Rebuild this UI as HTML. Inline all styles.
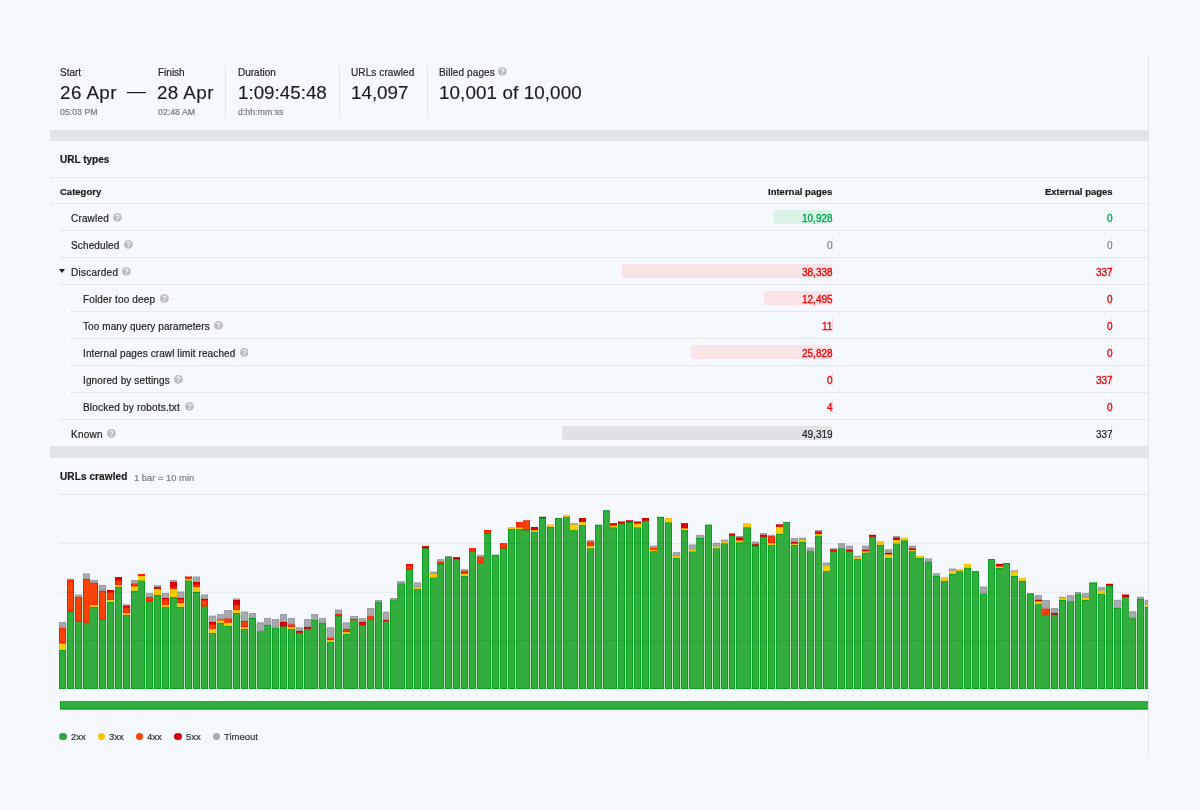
<!DOCTYPE html>
<html><head><meta charset="utf-8"><style>
html,body{margin:0;padding:0;}
body{width:1200px;height:810px;background:#f5f8fc;position:relative;overflow:hidden;font-family:"Liberation Sans", sans-serif;}
.t{position:absolute;white-space:nowrap;line-height:1;will-change:transform;-webkit-text-stroke:0.2px currentColor;}
.vl{position:absolute;width:1px;background:#e2e6eb;}
.hl{position:absolute;height:1px;background:#e4e7eb;}
.band{position:absolute;left:50px;width:1098px;background:#e1e5ea;}
.hq{position:absolute;}
.hq svg{display:block;}
.vb{position:absolute;border-radius:2px;}
.dot{position:absolute;width:7.4px;height:7.4px;border-radius:50%;}
</style></head><body>
<div class="t" style="left:59.50px;top:68.13px;font-size:10px;color:#262626;font-weight:normal;">Start</div><div class="t" style="left:59.50px;top:83.69px;font-size:18.8px;color:#1c1c1c;font-weight:normal;-webkit-text-stroke:0.15px currentColor;letter-spacing:0.44px;">26 Apr</div><div class="t" style="left:59.50px;top:108.35px;font-size:8.8px;color:#7a7a7a;font-weight:normal;">05:03 PM</div><div class="t" style="left:127.00px;top:81.89px;font-size:18.8px;color:#1c1c1c;font-weight:normal;-webkit-text-stroke:0.15px currentColor;">&mdash;</div><div class="t" style="left:157.80px;top:68.13px;font-size:10px;color:#262626;font-weight:normal;">Finish</div><div class="t" style="left:157.20px;top:83.69px;font-size:18.8px;color:#1c1c1c;font-weight:normal;-webkit-text-stroke:0.15px currentColor;letter-spacing:0.42px;">28 Apr</div><div class="t" style="left:157.80px;top:108.35px;font-size:8.8px;color:#7a7a7a;font-weight:normal;">02:48 AM</div><div class="t" style="left:237.80px;top:68.13px;font-size:10px;color:#262626;font-weight:normal;">Duration</div><div class="t" style="left:237.80px;top:83.69px;font-size:18.8px;color:#1c1c1c;font-weight:normal;-webkit-text-stroke:0.15px currentColor;">1:09:45:48</div><div class="t" style="left:237.80px;top:108.35px;font-size:8.8px;color:#7a7a7a;font-weight:normal;">d:hh:mm:ss</div><div class="t" style="left:351.20px;top:68.13px;font-size:10px;color:#262626;font-weight:normal;letter-spacing:0.1px;">URLs crawled</div><div class="t" style="left:351.20px;top:83.69px;font-size:18.8px;color:#1c1c1c;font-weight:normal;-webkit-text-stroke:0.15px currentColor;">14,097</div><div class="t" style="left:438.80px;top:68.13px;font-size:10px;color:#262626;font-weight:normal;letter-spacing:0.12px;">Billed pages</div><div class="hq" style="left:498.30px;top:67.30px;width:8.8px;height:8.8px"><svg width="8.8" height="8.8" viewBox="0 0 16 16"><circle cx="8" cy="8" r="8" fill="#bcbdc1"/><path d="M5.3 6.1a2.7 2.6 0 1 1 4.0 2.3c-.8.45-1.3.8-1.3 1.4v.2" stroke="#f4f5f7" stroke-width="2" fill="none"/><circle cx="8" cy="12.3" r="1.3" fill="#f4f5f7"/></svg></div><div class="t" style="left:438.80px;top:83.69px;font-size:18.8px;color:#1c1c1c;font-weight:normal;-webkit-text-stroke:0.15px currentColor;letter-spacing:0.11px;">10,001 of 10,000</div><div class="vl" style="left:225.3px;top:65px;height:52.5px"></div><div class="vl" style="left:338.7px;top:65px;height:52.5px"></div><div class="vl" style="left:426.5px;top:65px;height:52.5px"></div><div class="band" style="top:129.5px;height:11.3px"></div><div class="band" style="top:446.3px;height:11.5px"></div><div class="vl" style="left:1147.6px;top:56px;height:698px"></div><div class="t" style="left:59.70px;top:155.24px;font-size:10px;color:#1c1c1c;font-weight:bold;">URL types</div><div class="hl" style="left:50px;top:176.5px;width:1098px"></div><div class="t" style="left:59.70px;top:186.56px;font-size:9.5px;color:#1c1c1c;font-weight:bold;">Category</div><div class="t" style="right:367.50px;top:186.56px;font-size:9.5px;color:#1c1c1c;font-weight:bold;text-align:right;">Internal pages</div><div class="t" style="right:87.60px;top:186.56px;font-size:9.5px;color:#1c1c1c;font-weight:bold;text-align:right;">External pages</div><div class="hl" style="left:50px;top:203.40px;width:1098px"></div><div class="t" style="left:71.00px;top:213.74px;font-size:10px;color:#1e1e1e;font-weight:normal;letter-spacing:0.17px;">Crawled</div><div class="hq" style="left:113.10px;top:212.80px;width:8.8px;height:8.8px"><svg width="8.8" height="8.8" viewBox="0 0 16 16"><circle cx="8" cy="8" r="8" fill="#bcbdc1"/><path d="M5.3 6.1a2.7 2.6 0 1 1 4.0 2.3c-.8.45-1.3.8-1.3 1.4v.2" stroke="#f4f5f7" stroke-width="2" fill="none"/><circle cx="8" cy="12.3" r="1.3" fill="#f4f5f7"/></svg></div><div class="vb" style="left:772.50px;top:210.00px;width:59.80px;height:14.3px;background:#dcf3e7"></div><div class="vb" style="left:1111px;top:210.00px;width:1px;height:14.3px;background:#d8efe2;border-radius:0"></div><div class="t" style="right:367.50px;top:213.74px;font-size:10px;color:#00a650;font-weight:normal;text-align:right;-webkit-text-stroke:0.32px currentColor;">10,928</div><div class="t" style="right:87.60px;top:213.74px;font-size:10px;color:#00a650;font-weight:normal;text-align:right;-webkit-text-stroke:0.32px currentColor;">0</div><div class="hl" style="left:60px;top:230.40px;width:1088px"></div><div class="t" style="left:71.00px;top:240.74px;font-size:10px;color:#1e1e1e;font-weight:normal;letter-spacing:0.14px;">Scheduled</div><div class="hq" style="left:124.25px;top:239.80px;width:8.8px;height:8.8px"><svg width="8.8" height="8.8" viewBox="0 0 16 16"><circle cx="8" cy="8" r="8" fill="#bcbdc1"/><path d="M5.3 6.1a2.7 2.6 0 1 1 4.0 2.3c-.8.45-1.3.8-1.3 1.4v.2" stroke="#f4f5f7" stroke-width="2" fill="none"/><circle cx="8" cy="12.3" r="1.3" fill="#f4f5f7"/></svg></div><div class="vb" style="left:832px;top:237.00px;width:1px;height:14.3px;background:#e6e8ec;border-radius:0"></div><div class="vb" style="left:1111px;top:237.00px;width:1px;height:14.3px;background:#e6e8ec;border-radius:0"></div><div class="t" style="right:367.50px;top:240.74px;font-size:10px;color:#7d7d7d;font-weight:normal;text-align:right;">0</div><div class="t" style="right:87.60px;top:240.74px;font-size:10px;color:#7d7d7d;font-weight:normal;text-align:right;">0</div><div class="hl" style="left:60px;top:257.40px;width:1088px"></div><div class="t" style="left:71.00px;top:267.74px;font-size:10px;color:#1e1e1e;font-weight:normal;letter-spacing:0.24px;">Discarded</div><div class="hq" style="left:122.00px;top:266.80px;width:8.8px;height:8.8px"><svg width="8.8" height="8.8" viewBox="0 0 16 16"><circle cx="8" cy="8" r="8" fill="#bcbdc1"/><path d="M5.3 6.1a2.7 2.6 0 1 1 4.0 2.3c-.8.45-1.3.8-1.3 1.4v.2" stroke="#f4f5f7" stroke-width="2" fill="none"/><circle cx="8" cy="12.3" r="1.3" fill="#f4f5f7"/></svg></div><div class="t" style="left:58.9px;top:269.00px;width:0;height:0;border-left:3px solid transparent;border-right:3px solid transparent;border-top:4.8px solid #1c1c1c"></div><div class="vb" style="left:622.30px;top:264.00px;width:210.00px;height:14.3px;background:#f9e3e7"></div><div class="vb" style="left:1111px;top:264.00px;width:1px;height:14.3px;background:#f5dbe0;border-radius:0"></div><div class="t" style="right:367.50px;top:267.74px;font-size:10px;color:#f50000;font-weight:normal;text-align:right;-webkit-text-stroke:0.32px currentColor;">38,338</div><div class="t" style="right:87.60px;top:267.74px;font-size:10px;color:#f50000;font-weight:normal;text-align:right;-webkit-text-stroke:0.32px currentColor;">337</div><div class="hl" style="left:60px;top:284.40px;width:1088px"></div><div class="t" style="left:83.00px;top:294.74px;font-size:10px;color:#1e1e1e;font-weight:normal;letter-spacing:0.14px;">Folder too deep</div><div class="hq" style="left:160.00px;top:293.80px;width:8.8px;height:8.8px"><svg width="8.8" height="8.8" viewBox="0 0 16 16"><circle cx="8" cy="8" r="8" fill="#bcbdc1"/><path d="M5.3 6.1a2.7 2.6 0 1 1 4.0 2.3c-.8.45-1.3.8-1.3 1.4v.2" stroke="#f4f5f7" stroke-width="2" fill="none"/><circle cx="8" cy="12.3" r="1.3" fill="#f4f5f7"/></svg></div><div class="vb" style="left:763.90px;top:291.00px;width:68.40px;height:14.3px;background:#f9e3e7"></div><div class="vb" style="left:1111px;top:291.00px;width:1px;height:14.3px;background:#f5dbe0;border-radius:0"></div><div class="t" style="right:367.50px;top:294.74px;font-size:10px;color:#f50000;font-weight:normal;text-align:right;-webkit-text-stroke:0.32px currentColor;">12,495</div><div class="t" style="right:87.60px;top:294.74px;font-size:10px;color:#f50000;font-weight:normal;text-align:right;-webkit-text-stroke:0.32px currentColor;">0</div><div class="hl" style="left:71px;top:311.40px;width:1077px"></div><div class="t" style="left:83.00px;top:321.74px;font-size:10px;color:#1e1e1e;font-weight:normal;letter-spacing:0.09px;">Too many query parameters</div><div class="hq" style="left:214.25px;top:320.80px;width:8.8px;height:8.8px"><svg width="8.8" height="8.8" viewBox="0 0 16 16"><circle cx="8" cy="8" r="8" fill="#bcbdc1"/><path d="M5.3 6.1a2.7 2.6 0 1 1 4.0 2.3c-.8.45-1.3.8-1.3 1.4v.2" stroke="#f4f5f7" stroke-width="2" fill="none"/><circle cx="8" cy="12.3" r="1.3" fill="#f4f5f7"/></svg></div><div class="vb" style="left:832px;top:318.00px;width:1px;height:14.3px;background:#f5dbe0;border-radius:0"></div><div class="vb" style="left:1111px;top:318.00px;width:1px;height:14.3px;background:#f5dbe0;border-radius:0"></div><div class="t" style="right:367.50px;top:321.74px;font-size:10px;color:#f50000;font-weight:normal;text-align:right;-webkit-text-stroke:0.32px currentColor;">11</div><div class="t" style="right:87.60px;top:321.74px;font-size:10px;color:#f50000;font-weight:normal;text-align:right;-webkit-text-stroke:0.32px currentColor;">0</div><div class="hl" style="left:71px;top:338.40px;width:1077px"></div><div class="t" style="left:83.00px;top:348.74px;font-size:10px;color:#1e1e1e;font-weight:normal;letter-spacing:0.1px;">Internal pages crawl limit reached</div><div class="hq" style="left:239.50px;top:347.80px;width:8.8px;height:8.8px"><svg width="8.8" height="8.8" viewBox="0 0 16 16"><circle cx="8" cy="8" r="8" fill="#bcbdc1"/><path d="M5.3 6.1a2.7 2.6 0 1 1 4.0 2.3c-.8.45-1.3.8-1.3 1.4v.2" stroke="#f4f5f7" stroke-width="2" fill="none"/><circle cx="8" cy="12.3" r="1.3" fill="#f4f5f7"/></svg></div><div class="vb" style="left:690.90px;top:345.00px;width:141.40px;height:14.3px;background:#f9e3e7"></div><div class="vb" style="left:1111px;top:345.00px;width:1px;height:14.3px;background:#f5dbe0;border-radius:0"></div><div class="t" style="right:367.50px;top:348.74px;font-size:10px;color:#f50000;font-weight:normal;text-align:right;-webkit-text-stroke:0.32px currentColor;">25,828</div><div class="t" style="right:87.60px;top:348.74px;font-size:10px;color:#f50000;font-weight:normal;text-align:right;-webkit-text-stroke:0.32px currentColor;">0</div><div class="hl" style="left:71px;top:365.40px;width:1077px"></div><div class="t" style="left:83.00px;top:375.74px;font-size:10px;color:#1e1e1e;font-weight:normal;letter-spacing:0.12px;">Ignored by settings</div><div class="hq" style="left:174.25px;top:374.80px;width:8.8px;height:8.8px"><svg width="8.8" height="8.8" viewBox="0 0 16 16"><circle cx="8" cy="8" r="8" fill="#bcbdc1"/><path d="M5.3 6.1a2.7 2.6 0 1 1 4.0 2.3c-.8.45-1.3.8-1.3 1.4v.2" stroke="#f4f5f7" stroke-width="2" fill="none"/><circle cx="8" cy="12.3" r="1.3" fill="#f4f5f7"/></svg></div><div class="vb" style="left:832px;top:372.00px;width:1px;height:14.3px;background:#f5dbe0;border-radius:0"></div><div class="vb" style="left:1111px;top:372.00px;width:1px;height:14.3px;background:#f5dbe0;border-radius:0"></div><div class="t" style="right:367.50px;top:375.74px;font-size:10px;color:#f50000;font-weight:normal;text-align:right;-webkit-text-stroke:0.32px currentColor;">0</div><div class="t" style="right:87.60px;top:375.74px;font-size:10px;color:#f50000;font-weight:normal;text-align:right;-webkit-text-stroke:0.32px currentColor;">337</div><div class="hl" style="left:71px;top:392.40px;width:1077px"></div><div class="t" style="left:83.00px;top:402.74px;font-size:10px;color:#1e1e1e;font-weight:normal;letter-spacing:0.2px;">Blocked by robots.txt</div><div class="hq" style="left:185.00px;top:401.80px;width:8.8px;height:8.8px"><svg width="8.8" height="8.8" viewBox="0 0 16 16"><circle cx="8" cy="8" r="8" fill="#bcbdc1"/><path d="M5.3 6.1a2.7 2.6 0 1 1 4.0 2.3c-.8.45-1.3.8-1.3 1.4v.2" stroke="#f4f5f7" stroke-width="2" fill="none"/><circle cx="8" cy="12.3" r="1.3" fill="#f4f5f7"/></svg></div><div class="vb" style="left:832px;top:399.00px;width:1px;height:14.3px;background:#f5dbe0;border-radius:0"></div><div class="vb" style="left:1111px;top:399.00px;width:1px;height:14.3px;background:#f5dbe0;border-radius:0"></div><div class="t" style="right:367.50px;top:402.74px;font-size:10px;color:#f50000;font-weight:normal;text-align:right;-webkit-text-stroke:0.32px currentColor;">4</div><div class="t" style="right:87.60px;top:402.74px;font-size:10px;color:#f50000;font-weight:normal;text-align:right;-webkit-text-stroke:0.32px currentColor;">0</div><div class="hl" style="left:60px;top:419.40px;width:1088px"></div><div class="t" style="left:71.00px;top:429.74px;font-size:10px;color:#1e1e1e;font-weight:normal;letter-spacing:0.22px;">Known</div><div class="hq" style="left:107.00px;top:428.80px;width:8.8px;height:8.8px"><svg width="8.8" height="8.8" viewBox="0 0 16 16"><circle cx="8" cy="8" r="8" fill="#bcbdc1"/><path d="M5.3 6.1a2.7 2.6 0 1 1 4.0 2.3c-.8.45-1.3.8-1.3 1.4v.2" stroke="#f4f5f7" stroke-width="2" fill="none"/><circle cx="8" cy="12.3" r="1.3" fill="#f4f5f7"/></svg></div><div class="vb" style="left:561.80px;top:426.00px;width:270.50px;height:14.3px;background:#e1e2e5"></div><div class="vb" style="left:1111px;top:426.00px;width:1px;height:14.3px;background:#d6d8dc;border-radius:0"></div><div class="t" style="right:367.50px;top:429.74px;font-size:10px;color:#222222;font-weight:normal;text-align:right;">49,319</div><div class="t" style="right:87.60px;top:429.74px;font-size:10px;color:#222222;font-weight:normal;text-align:right;">337</div><div class="t" style="left:60.00px;top:472.04px;font-size:10px;color:#1c1c1c;font-weight:bold;letter-spacing:0.11px;">URLs crawled</div><div class="t" style="left:133.70px;top:473.14px;font-size:9.4px;color:#7d7d7d;font-weight:normal;">1 bar = 10 min</div>
<svg class="chart" width="1200" height="810" viewBox="0 0 1200 810" style="position:absolute;left:0;top:0"><defs><clipPath id="cp"><rect x="0" y="0" width="1148" height="810"/></clipPath></defs><g clip-path="url(#cp)"><rect x="66" y="623.2" width="1" height="65.8" fill="#c2e2c3"/>
<rect x="59" y="650.00" width="7" height="39.00" fill="#33ae3e"/>
<rect x="59" y="650.00" width="7" height="1" fill="#07a220"/>
<rect x="59" y="688.00" width="7" height="1" fill="#07a220"/>
<rect x="59" y="650.00" width="1" height="39.00" fill="#07a220"/>
<rect x="65" y="650.00" width="1" height="39.00" fill="#07a220"/>
<rect x="59" y="643.30" width="7" height="6.70" fill="#fcd000"/>
<rect x="59" y="643.30" width="7" height="1" fill="#f6c200"/>
<rect x="59" y="649.00" width="7" height="1" fill="#f6c200"/>
<rect x="59" y="643.30" width="1" height="6.70" fill="#f6c200"/>
<rect x="65" y="643.30" width="1" height="6.70" fill="#f6c200"/>
<rect x="59" y="627.50" width="7" height="15.80" fill="#fa4208"/>
<rect x="59" y="627.50" width="7" height="1" fill="#ff1800"/>
<rect x="59" y="642.30" width="7" height="1" fill="#ff1800"/>
<rect x="59" y="627.50" width="1" height="15.80" fill="#ff1800"/>
<rect x="65" y="627.50" width="1" height="15.80" fill="#ff1800"/>
<rect x="59" y="622.20" width="7" height="5.30" fill="#a9aaaf"/>
<rect x="59" y="622.20" width="7" height="1" fill="#9c9ca2"/>
<rect x="59" y="626.50" width="7" height="1" fill="#9c9ca2"/>
<rect x="59" y="622.20" width="1" height="5.30" fill="#9c9ca2"/>
<rect x="65" y="622.20" width="1" height="5.30" fill="#9c9ca2"/>
<rect x="74" y="595.7" width="1" height="93.3" fill="#c2e2c3"/>
<rect x="67" y="611.30" width="7" height="77.70" fill="#33ae3e"/>
<rect x="67" y="611.30" width="7" height="1" fill="#07a220"/>
<rect x="67" y="688.00" width="7" height="1" fill="#07a220"/>
<rect x="67" y="611.30" width="1" height="77.70" fill="#07a220"/>
<rect x="73" y="611.30" width="1" height="77.70" fill="#07a220"/>
<rect x="67" y="580.00" width="7" height="31.30" fill="#fa4208"/>
<rect x="67" y="580.00" width="7" height="1" fill="#ff1800"/>
<rect x="67" y="610.30" width="7" height="1" fill="#ff1800"/>
<rect x="67" y="580.00" width="1" height="31.30" fill="#ff1800"/>
<rect x="73" y="580.00" width="1" height="31.30" fill="#ff1800"/>
<rect x="67" y="578.80" width="7" height="1.20" fill="#a9aaaf"/>
<rect x="67" y="578.80" width="7" height="1" fill="#9c9ca2"/>
<rect x="67" y="578.80" width="1" height="1.20" fill="#9c9ca2"/>
<rect x="73" y="578.80" width="1" height="1.20" fill="#9c9ca2"/>
<rect x="82" y="595.7" width="1" height="93.3" fill="#c2e2c3"/>
<rect x="75" y="620.80" width="7" height="68.20" fill="#33ae3e"/>
<rect x="75" y="620.80" width="7" height="1" fill="#07a220"/>
<rect x="75" y="688.00" width="7" height="1" fill="#07a220"/>
<rect x="75" y="620.80" width="1" height="68.20" fill="#07a220"/>
<rect x="81" y="620.80" width="1" height="68.20" fill="#07a220"/>
<rect x="75" y="596.70" width="7" height="24.10" fill="#fa4208"/>
<rect x="75" y="596.70" width="7" height="1" fill="#ff1800"/>
<rect x="75" y="619.80" width="7" height="1" fill="#ff1800"/>
<rect x="75" y="596.70" width="1" height="24.10" fill="#ff1800"/>
<rect x="81" y="596.70" width="1" height="24.10" fill="#ff1800"/>
<rect x="75" y="594.70" width="7" height="2.00" fill="#a9aaaf"/>
<rect x="75" y="594.70" width="7" height="1" fill="#9c9ca2"/>
<rect x="75" y="595.70" width="7" height="1" fill="#9c9ca2"/>
<rect x="75" y="594.70" width="1" height="2.00" fill="#9c9ca2"/>
<rect x="81" y="594.70" width="1" height="2.00" fill="#9c9ca2"/>
<rect x="83" y="622.50" width="7" height="66.50" fill="#33ae3e"/>
<rect x="83" y="622.50" width="7" height="1" fill="#07a220"/>
<rect x="83" y="688.00" width="7" height="1" fill="#07a220"/>
<rect x="83" y="622.50" width="1" height="66.50" fill="#07a220"/>
<rect x="83" y="578.80" width="7" height="43.70" fill="#fa4208"/>
<rect x="83" y="578.80" width="7" height="1" fill="#ff1800"/>
<rect x="83" y="621.50" width="7" height="1" fill="#ff1800"/>
<rect x="83" y="578.80" width="1" height="43.70" fill="#ff1800"/>
<rect x="83" y="573.70" width="7" height="5.10" fill="#a9aaaf"/>
<rect x="83" y="573.70" width="7" height="1" fill="#9c9ca2"/>
<rect x="83" y="577.80" width="7" height="1" fill="#9c9ca2"/>
<rect x="83" y="573.70" width="1" height="5.10" fill="#9c9ca2"/>
<rect x="98" y="586.0" width="1" height="103.0" fill="#c2e2c3"/>
<rect x="90" y="607.00" width="8" height="82.00" fill="#33ae3e"/>
<rect x="90" y="607.00" width="8" height="1" fill="#07a220"/>
<rect x="90" y="688.00" width="8" height="1" fill="#07a220"/>
<rect x="97" y="607.00" width="1" height="82.00" fill="#07a220"/>
<rect x="90" y="604.70" width="8" height="2.30" fill="#fcd000"/>
<rect x="90" y="604.70" width="8" height="1" fill="#f6c200"/>
<rect x="90" y="606.00" width="8" height="1" fill="#f6c200"/>
<rect x="97" y="604.70" width="1" height="2.30" fill="#f6c200"/>
<rect x="90" y="582.50" width="8" height="22.20" fill="#fa4208"/>
<rect x="90" y="582.50" width="8" height="1" fill="#ff1800"/>
<rect x="90" y="603.70" width="8" height="1" fill="#ff1800"/>
<rect x="97" y="582.50" width="1" height="22.20" fill="#ff1800"/>
<rect x="90" y="580.00" width="8" height="2.50" fill="#a9aaaf"/>
<rect x="90" y="580.00" width="8" height="1" fill="#9c9ca2"/>
<rect x="90" y="581.50" width="8" height="1" fill="#9c9ca2"/>
<rect x="97" y="580.00" width="1" height="2.50" fill="#9c9ca2"/>
<rect x="106" y="591.0" width="1" height="98.0" fill="#c2e2c3"/>
<rect x="99" y="619.50" width="7" height="69.50" fill="#33ae3e"/>
<rect x="99" y="619.50" width="7" height="1" fill="#07a220"/>
<rect x="99" y="688.00" width="7" height="1" fill="#07a220"/>
<rect x="99" y="619.50" width="1" height="69.50" fill="#07a220"/>
<rect x="105" y="619.50" width="1" height="69.50" fill="#07a220"/>
<rect x="99" y="590.50" width="7" height="29.00" fill="#fa4208"/>
<rect x="99" y="590.50" width="7" height="1" fill="#ff1800"/>
<rect x="99" y="618.50" width="7" height="1" fill="#ff1800"/>
<rect x="99" y="590.50" width="1" height="29.00" fill="#ff1800"/>
<rect x="105" y="590.50" width="1" height="29.00" fill="#ff1800"/>
<rect x="99" y="585.00" width="7" height="5.50" fill="#a9aaaf"/>
<rect x="99" y="585.00" width="7" height="1" fill="#9c9ca2"/>
<rect x="99" y="589.50" width="7" height="1" fill="#9c9ca2"/>
<rect x="99" y="585.00" width="1" height="5.50" fill="#9c9ca2"/>
<rect x="105" y="585.00" width="1" height="5.50" fill="#9c9ca2"/>
<rect x="114" y="591.0" width="1" height="98.0" fill="#c2e2c3"/>
<rect x="107" y="602.00" width="7" height="87.00" fill="#33ae3e"/>
<rect x="107" y="602.00" width="7" height="1" fill="#07a220"/>
<rect x="107" y="688.00" width="7" height="1" fill="#07a220"/>
<rect x="107" y="602.00" width="1" height="87.00" fill="#07a220"/>
<rect x="113" y="602.00" width="1" height="87.00" fill="#07a220"/>
<rect x="107" y="599.70" width="7" height="2.30" fill="#fcd000"/>
<rect x="107" y="599.70" width="7" height="1" fill="#f6c200"/>
<rect x="107" y="601.00" width="7" height="1" fill="#f6c200"/>
<rect x="107" y="599.70" width="1" height="2.30" fill="#f6c200"/>
<rect x="113" y="599.70" width="1" height="2.30" fill="#f6c200"/>
<rect x="107" y="591.70" width="7" height="8.00" fill="#fa4208"/>
<rect x="107" y="591.70" width="7" height="1" fill="#ff1800"/>
<rect x="107" y="598.70" width="7" height="1" fill="#ff1800"/>
<rect x="107" y="591.70" width="1" height="8.00" fill="#ff1800"/>
<rect x="113" y="591.70" width="1" height="8.00" fill="#ff1800"/>
<rect x="107" y="590.00" width="7" height="1.70" fill="#e0000c"/>
<rect x="107" y="590.00" width="7" height="1" fill="#d10000"/>
<rect x="107" y="590.70" width="7" height="1" fill="#d10000"/>
<rect x="107" y="590.00" width="1" height="1.70" fill="#d10000"/>
<rect x="113" y="590.00" width="1" height="1.70" fill="#d10000"/>
<rect x="122" y="605.5" width="1" height="83.5" fill="#c2e2c3"/>
<rect x="115" y="587.00" width="7" height="102.00" fill="#33ae3e"/>
<rect x="115" y="587.00" width="7" height="1" fill="#07a220"/>
<rect x="115" y="688.00" width="7" height="1" fill="#07a220"/>
<rect x="115" y="587.00" width="1" height="102.00" fill="#07a220"/>
<rect x="121" y="587.00" width="1" height="102.00" fill="#07a220"/>
<rect x="115" y="584.70" width="7" height="2.30" fill="#fcd000"/>
<rect x="115" y="584.70" width="7" height="1" fill="#f6c200"/>
<rect x="115" y="586.00" width="7" height="1" fill="#f6c200"/>
<rect x="115" y="584.70" width="1" height="2.30" fill="#f6c200"/>
<rect x="121" y="584.70" width="1" height="2.30" fill="#f6c200"/>
<rect x="115" y="580.30" width="7" height="4.40" fill="#fa4208"/>
<rect x="115" y="580.30" width="7" height="1" fill="#ff1800"/>
<rect x="115" y="583.70" width="7" height="1" fill="#ff1800"/>
<rect x="115" y="580.30" width="1" height="4.40" fill="#ff1800"/>
<rect x="121" y="580.30" width="1" height="4.40" fill="#ff1800"/>
<rect x="115" y="577.00" width="7" height="3.30" fill="#e0000c"/>
<rect x="115" y="577.00" width="7" height="1" fill="#d10000"/>
<rect x="115" y="579.30" width="7" height="1" fill="#d10000"/>
<rect x="115" y="577.00" width="1" height="3.30" fill="#d10000"/>
<rect x="121" y="577.00" width="1" height="3.30" fill="#d10000"/>
<rect x="130" y="605.5" width="1" height="83.5" fill="#c2e2c3"/>
<rect x="123" y="614.70" width="7" height="74.30" fill="#33ae3e"/>
<rect x="123" y="614.70" width="7" height="1" fill="#07a220"/>
<rect x="123" y="688.00" width="7" height="1" fill="#07a220"/>
<rect x="123" y="614.70" width="1" height="74.30" fill="#07a220"/>
<rect x="129" y="614.70" width="1" height="74.30" fill="#07a220"/>
<rect x="123" y="613.00" width="7" height="1.70" fill="#fcd000"/>
<rect x="123" y="613.00" width="7" height="1" fill="#f6c200"/>
<rect x="123" y="613.70" width="7" height="1" fill="#f6c200"/>
<rect x="123" y="613.00" width="1" height="1.70" fill="#f6c200"/>
<rect x="129" y="613.00" width="1" height="1.70" fill="#f6c200"/>
<rect x="123" y="607.50" width="7" height="5.50" fill="#fa4208"/>
<rect x="123" y="607.50" width="7" height="1" fill="#ff1800"/>
<rect x="123" y="612.00" width="7" height="1" fill="#ff1800"/>
<rect x="123" y="607.50" width="1" height="5.50" fill="#ff1800"/>
<rect x="129" y="607.50" width="1" height="5.50" fill="#ff1800"/>
<rect x="123" y="605.30" width="7" height="2.20" fill="#e0000c"/>
<rect x="123" y="605.30" width="7" height="1" fill="#d10000"/>
<rect x="123" y="606.50" width="7" height="1" fill="#d10000"/>
<rect x="123" y="605.30" width="1" height="2.20" fill="#d10000"/>
<rect x="129" y="605.30" width="1" height="2.20" fill="#d10000"/>
<rect x="123" y="604.50" width="7" height="0.80" fill="#a9aaaf"/>
<rect x="123" y="604.50" width="7" height="1" fill="#9c9ca2"/>
<rect x="123" y="604.50" width="1" height="0.80" fill="#9c9ca2"/>
<rect x="129" y="604.50" width="1" height="0.80" fill="#9c9ca2"/>
<rect x="131" y="590.50" width="7" height="98.50" fill="#33ae3e"/>
<rect x="131" y="590.50" width="7" height="1" fill="#07a220"/>
<rect x="131" y="688.00" width="7" height="1" fill="#07a220"/>
<rect x="131" y="590.50" width="1" height="98.50" fill="#07a220"/>
<rect x="131" y="586.30" width="7" height="4.20" fill="#fcd000"/>
<rect x="131" y="586.30" width="7" height="1" fill="#f6c200"/>
<rect x="131" y="589.50" width="7" height="1" fill="#f6c200"/>
<rect x="131" y="586.30" width="1" height="4.20" fill="#f6c200"/>
<rect x="131" y="583.30" width="7" height="3.00" fill="#fa4208"/>
<rect x="131" y="583.30" width="7" height="1" fill="#ff1800"/>
<rect x="131" y="585.30" width="7" height="1" fill="#ff1800"/>
<rect x="131" y="583.30" width="1" height="3.00" fill="#ff1800"/>
<rect x="131" y="580.00" width="7" height="3.30" fill="#a9aaaf"/>
<rect x="131" y="580.00" width="7" height="1" fill="#9c9ca2"/>
<rect x="131" y="582.30" width="7" height="1" fill="#9c9ca2"/>
<rect x="131" y="580.00" width="1" height="3.30" fill="#9c9ca2"/>
<rect x="145" y="594.0" width="1" height="95.0" fill="#c2e2c3"/>
<rect x="138" y="580.30" width="7" height="108.70" fill="#33ae3e"/>
<rect x="138" y="580.30" width="7" height="1" fill="#07a220"/>
<rect x="138" y="688.00" width="7" height="1" fill="#07a220"/>
<rect x="144" y="580.30" width="1" height="108.70" fill="#07a220"/>
<rect x="138" y="575.80" width="7" height="4.50" fill="#fcd000"/>
<rect x="138" y="575.80" width="7" height="1" fill="#f6c200"/>
<rect x="138" y="579.30" width="7" height="1" fill="#f6c200"/>
<rect x="144" y="575.80" width="1" height="4.50" fill="#f6c200"/>
<rect x="138" y="574.20" width="7" height="1.60" fill="#fa4208"/>
<rect x="138" y="574.20" width="7" height="1" fill="#ff1800"/>
<rect x="138" y="574.80" width="7" height="1" fill="#ff1800"/>
<rect x="144" y="574.20" width="1" height="1.60" fill="#ff1800"/>
<rect x="153" y="594.0" width="1" height="95.0" fill="#c2e2c3"/>
<rect x="146" y="601.30" width="7" height="87.70" fill="#33ae3e"/>
<rect x="146" y="601.30" width="7" height="1" fill="#07a220"/>
<rect x="146" y="688.00" width="7" height="1" fill="#07a220"/>
<rect x="146" y="601.30" width="1" height="87.70" fill="#07a220"/>
<rect x="152" y="601.30" width="1" height="87.70" fill="#07a220"/>
<rect x="146" y="596.70" width="7" height="4.60" fill="#fa4208"/>
<rect x="146" y="596.70" width="7" height="1" fill="#ff1800"/>
<rect x="146" y="600.30" width="7" height="1" fill="#ff1800"/>
<rect x="146" y="596.70" width="1" height="4.60" fill="#ff1800"/>
<rect x="152" y="596.70" width="1" height="4.60" fill="#ff1800"/>
<rect x="146" y="593.00" width="7" height="3.70" fill="#a9aaaf"/>
<rect x="146" y="593.00" width="7" height="1" fill="#9c9ca2"/>
<rect x="146" y="595.70" width="7" height="1" fill="#9c9ca2"/>
<rect x="146" y="593.00" width="1" height="3.70" fill="#9c9ca2"/>
<rect x="152" y="593.00" width="1" height="3.70" fill="#9c9ca2"/>
<rect x="161" y="594.3" width="1" height="94.7" fill="#c2e2c3"/>
<rect x="154" y="595.00" width="7" height="94.00" fill="#33ae3e"/>
<rect x="154" y="595.00" width="7" height="1" fill="#07a220"/>
<rect x="154" y="688.00" width="7" height="1" fill="#07a220"/>
<rect x="154" y="595.00" width="1" height="94.00" fill="#07a220"/>
<rect x="160" y="595.00" width="1" height="94.00" fill="#07a220"/>
<rect x="154" y="588.70" width="7" height="6.30" fill="#fcd000"/>
<rect x="154" y="588.70" width="7" height="1" fill="#f6c200"/>
<rect x="154" y="594.00" width="7" height="1" fill="#f6c200"/>
<rect x="154" y="588.70" width="1" height="6.30" fill="#f6c200"/>
<rect x="160" y="588.70" width="1" height="6.30" fill="#f6c200"/>
<rect x="154" y="586.70" width="7" height="2.00" fill="#e0000c"/>
<rect x="154" y="586.70" width="7" height="1" fill="#d10000"/>
<rect x="154" y="587.70" width="7" height="1" fill="#d10000"/>
<rect x="154" y="586.70" width="1" height="2.00" fill="#d10000"/>
<rect x="160" y="586.70" width="1" height="2.00" fill="#d10000"/>
<rect x="154" y="585.30" width="7" height="1.40" fill="#a9aaaf"/>
<rect x="154" y="585.30" width="7" height="1" fill="#9c9ca2"/>
<rect x="154" y="585.30" width="1" height="1.40" fill="#9c9ca2"/>
<rect x="160" y="585.30" width="1" height="1.40" fill="#9c9ca2"/>
<rect x="169" y="594.3" width="1" height="94.7" fill="#c2e2c3"/>
<rect x="162" y="606.70" width="7" height="82.30" fill="#33ae3e"/>
<rect x="162" y="606.70" width="7" height="1" fill="#07a220"/>
<rect x="162" y="688.00" width="7" height="1" fill="#07a220"/>
<rect x="162" y="606.70" width="1" height="82.30" fill="#07a220"/>
<rect x="168" y="606.70" width="1" height="82.30" fill="#07a220"/>
<rect x="162" y="604.70" width="7" height="2.00" fill="#fcd000"/>
<rect x="162" y="604.70" width="7" height="1" fill="#f6c200"/>
<rect x="162" y="605.70" width="7" height="1" fill="#f6c200"/>
<rect x="162" y="604.70" width="1" height="2.00" fill="#f6c200"/>
<rect x="168" y="604.70" width="1" height="2.00" fill="#f6c200"/>
<rect x="162" y="599.20" width="7" height="5.50" fill="#fa4208"/>
<rect x="162" y="599.20" width="7" height="1" fill="#ff1800"/>
<rect x="162" y="603.70" width="7" height="1" fill="#ff1800"/>
<rect x="162" y="599.20" width="1" height="5.50" fill="#ff1800"/>
<rect x="168" y="599.20" width="1" height="5.50" fill="#ff1800"/>
<rect x="162" y="598.00" width="7" height="1.20" fill="#e0000c"/>
<rect x="162" y="598.00" width="7" height="1" fill="#d10000"/>
<rect x="162" y="598.00" width="1" height="1.20" fill="#d10000"/>
<rect x="168" y="598.00" width="1" height="1.20" fill="#d10000"/>
<rect x="162" y="593.30" width="7" height="4.70" fill="#a9aaaf"/>
<rect x="162" y="593.30" width="7" height="1" fill="#9c9ca2"/>
<rect x="162" y="597.00" width="7" height="1" fill="#9c9ca2"/>
<rect x="162" y="593.30" width="1" height="4.70" fill="#9c9ca2"/>
<rect x="168" y="593.30" width="1" height="4.70" fill="#9c9ca2"/>
<rect x="170" y="597.00" width="7" height="92.00" fill="#33ae3e"/>
<rect x="170" y="597.00" width="7" height="1" fill="#07a220"/>
<rect x="170" y="688.00" width="7" height="1" fill="#07a220"/>
<rect x="170" y="597.00" width="1" height="92.00" fill="#07a220"/>
<rect x="170" y="588.70" width="7" height="8.30" fill="#fcd000"/>
<rect x="170" y="588.70" width="7" height="1" fill="#f6c200"/>
<rect x="170" y="596.00" width="7" height="1" fill="#f6c200"/>
<rect x="170" y="588.70" width="1" height="8.30" fill="#f6c200"/>
<rect x="170" y="586.70" width="7" height="2.00" fill="#fa4208"/>
<rect x="170" y="586.70" width="7" height="1" fill="#ff1800"/>
<rect x="170" y="587.70" width="7" height="1" fill="#ff1800"/>
<rect x="170" y="586.70" width="1" height="2.00" fill="#ff1800"/>
<rect x="170" y="581.70" width="7" height="5.00" fill="#e0000c"/>
<rect x="170" y="581.70" width="7" height="1" fill="#d10000"/>
<rect x="170" y="585.70" width="7" height="1" fill="#d10000"/>
<rect x="170" y="581.70" width="1" height="5.00" fill="#d10000"/>
<rect x="170" y="580.00" width="7" height="1.70" fill="#a9aaaf"/>
<rect x="170" y="580.00" width="7" height="1" fill="#9c9ca2"/>
<rect x="170" y="580.70" width="7" height="1" fill="#9c9ca2"/>
<rect x="170" y="580.00" width="1" height="1.70" fill="#9c9ca2"/>
<rect x="184" y="592.7" width="1" height="96.3" fill="#c2e2c3"/>
<rect x="177" y="606.70" width="7" height="82.30" fill="#33ae3e"/>
<rect x="177" y="606.70" width="7" height="1" fill="#07a220"/>
<rect x="177" y="688.00" width="7" height="1" fill="#07a220"/>
<rect x="183" y="606.70" width="1" height="82.30" fill="#07a220"/>
<rect x="177" y="603.00" width="7" height="3.70" fill="#fcd000"/>
<rect x="177" y="603.00" width="7" height="1" fill="#f6c200"/>
<rect x="177" y="605.70" width="7" height="1" fill="#f6c200"/>
<rect x="183" y="603.00" width="1" height="3.70" fill="#f6c200"/>
<rect x="177" y="599.20" width="7" height="3.80" fill="#fa4208"/>
<rect x="177" y="599.20" width="7" height="1" fill="#ff1800"/>
<rect x="177" y="602.00" width="7" height="1" fill="#ff1800"/>
<rect x="183" y="599.20" width="1" height="3.80" fill="#ff1800"/>
<rect x="177" y="598.00" width="7" height="1.20" fill="#e0000c"/>
<rect x="177" y="598.00" width="7" height="1" fill="#d10000"/>
<rect x="183" y="598.00" width="1" height="1.20" fill="#d10000"/>
<rect x="177" y="591.70" width="7" height="6.30" fill="#a9aaaf"/>
<rect x="177" y="591.70" width="7" height="1" fill="#9c9ca2"/>
<rect x="177" y="597.00" width="7" height="1" fill="#9c9ca2"/>
<rect x="183" y="591.70" width="1" height="6.30" fill="#9c9ca2"/>
<rect x="192" y="577.7" width="1" height="111.3" fill="#c2e2c3"/>
<rect x="185" y="580.30" width="7" height="108.70" fill="#33ae3e"/>
<rect x="185" y="580.30" width="7" height="1" fill="#07a220"/>
<rect x="185" y="688.00" width="7" height="1" fill="#07a220"/>
<rect x="185" y="580.30" width="1" height="108.70" fill="#07a220"/>
<rect x="191" y="580.30" width="1" height="108.70" fill="#07a220"/>
<rect x="185" y="578.70" width="7" height="1.60" fill="#fcd000"/>
<rect x="185" y="578.70" width="7" height="1" fill="#f6c200"/>
<rect x="185" y="579.30" width="7" height="1" fill="#f6c200"/>
<rect x="185" y="578.70" width="1" height="1.60" fill="#f6c200"/>
<rect x="191" y="578.70" width="1" height="1.60" fill="#f6c200"/>
<rect x="185" y="576.70" width="7" height="2.00" fill="#fa4208"/>
<rect x="185" y="576.70" width="7" height="1" fill="#ff1800"/>
<rect x="185" y="577.70" width="7" height="1" fill="#ff1800"/>
<rect x="185" y="576.70" width="1" height="2.00" fill="#ff1800"/>
<rect x="191" y="576.70" width="1" height="2.00" fill="#ff1800"/>
<rect x="200" y="595.7" width="1" height="93.3" fill="#c2e2c3"/>
<rect x="193" y="592.00" width="7" height="97.00" fill="#33ae3e"/>
<rect x="193" y="592.00" width="7" height="1" fill="#07a220"/>
<rect x="193" y="688.00" width="7" height="1" fill="#07a220"/>
<rect x="193" y="592.00" width="1" height="97.00" fill="#07a220"/>
<rect x="199" y="592.00" width="1" height="97.00" fill="#07a220"/>
<rect x="193" y="586.70" width="7" height="5.30" fill="#fcd000"/>
<rect x="193" y="586.70" width="7" height="1" fill="#f6c200"/>
<rect x="193" y="591.00" width="7" height="1" fill="#f6c200"/>
<rect x="193" y="586.70" width="1" height="5.30" fill="#f6c200"/>
<rect x="199" y="586.70" width="1" height="5.30" fill="#f6c200"/>
<rect x="193" y="584.20" width="7" height="2.50" fill="#fa4208"/>
<rect x="193" y="584.20" width="7" height="1" fill="#ff1800"/>
<rect x="193" y="585.70" width="7" height="1" fill="#ff1800"/>
<rect x="193" y="584.20" width="1" height="2.50" fill="#ff1800"/>
<rect x="199" y="584.20" width="1" height="2.50" fill="#ff1800"/>
<rect x="193" y="582.00" width="7" height="2.20" fill="#e0000c"/>
<rect x="193" y="582.00" width="7" height="1" fill="#d10000"/>
<rect x="193" y="583.20" width="7" height="1" fill="#d10000"/>
<rect x="193" y="582.00" width="1" height="2.20" fill="#d10000"/>
<rect x="199" y="582.00" width="1" height="2.20" fill="#d10000"/>
<rect x="193" y="576.70" width="7" height="5.30" fill="#a9aaaf"/>
<rect x="193" y="576.70" width="7" height="1" fill="#9c9ca2"/>
<rect x="193" y="581.00" width="7" height="1" fill="#9c9ca2"/>
<rect x="193" y="576.70" width="1" height="5.30" fill="#9c9ca2"/>
<rect x="199" y="576.70" width="1" height="5.30" fill="#9c9ca2"/>
<rect x="208" y="616.8" width="1" height="72.2" fill="#c2e2c3"/>
<rect x="201" y="606.30" width="7" height="82.70" fill="#33ae3e"/>
<rect x="201" y="606.30" width="7" height="1" fill="#07a220"/>
<rect x="201" y="688.00" width="7" height="1" fill="#07a220"/>
<rect x="201" y="606.30" width="1" height="82.70" fill="#07a220"/>
<rect x="207" y="606.30" width="1" height="82.70" fill="#07a220"/>
<rect x="201" y="600.00" width="7" height="6.30" fill="#fa4208"/>
<rect x="201" y="600.00" width="7" height="1" fill="#ff1800"/>
<rect x="201" y="605.30" width="7" height="1" fill="#ff1800"/>
<rect x="201" y="600.00" width="1" height="6.30" fill="#ff1800"/>
<rect x="207" y="600.00" width="1" height="6.30" fill="#ff1800"/>
<rect x="201" y="598.70" width="7" height="1.30" fill="#e0000c"/>
<rect x="201" y="598.70" width="7" height="1" fill="#d10000"/>
<rect x="201" y="598.70" width="1" height="1.30" fill="#d10000"/>
<rect x="207" y="598.70" width="1" height="1.30" fill="#d10000"/>
<rect x="201" y="594.70" width="7" height="4.00" fill="#a9aaaf"/>
<rect x="201" y="594.70" width="7" height="1" fill="#9c9ca2"/>
<rect x="201" y="597.70" width="7" height="1" fill="#9c9ca2"/>
<rect x="201" y="594.70" width="1" height="4.00" fill="#9c9ca2"/>
<rect x="207" y="594.70" width="1" height="4.00" fill="#9c9ca2"/>
<rect x="216" y="616.8" width="1" height="72.2" fill="#c2e2c3"/>
<rect x="209" y="632.80" width="7" height="56.20" fill="#33ae3e"/>
<rect x="209" y="632.80" width="7" height="1" fill="#07a220"/>
<rect x="209" y="688.00" width="7" height="1" fill="#07a220"/>
<rect x="209" y="632.80" width="1" height="56.20" fill="#07a220"/>
<rect x="215" y="632.80" width="1" height="56.20" fill="#07a220"/>
<rect x="209" y="628.70" width="7" height="4.10" fill="#fcd000"/>
<rect x="209" y="628.70" width="7" height="1" fill="#f6c200"/>
<rect x="209" y="631.80" width="7" height="1" fill="#f6c200"/>
<rect x="209" y="628.70" width="1" height="4.10" fill="#f6c200"/>
<rect x="215" y="628.70" width="1" height="4.10" fill="#f6c200"/>
<rect x="209" y="624.20" width="7" height="4.50" fill="#fa4208"/>
<rect x="209" y="624.20" width="7" height="1" fill="#ff1800"/>
<rect x="209" y="627.70" width="7" height="1" fill="#ff1800"/>
<rect x="209" y="624.20" width="1" height="4.50" fill="#ff1800"/>
<rect x="215" y="624.20" width="1" height="4.50" fill="#ff1800"/>
<rect x="209" y="622.00" width="7" height="2.20" fill="#e0000c"/>
<rect x="209" y="622.00" width="7" height="1" fill="#d10000"/>
<rect x="209" y="623.20" width="7" height="1" fill="#d10000"/>
<rect x="209" y="622.00" width="1" height="2.20" fill="#d10000"/>
<rect x="215" y="622.00" width="1" height="2.20" fill="#d10000"/>
<rect x="209" y="615.80" width="7" height="6.20" fill="#a9aaaf"/>
<rect x="209" y="615.80" width="7" height="1" fill="#9c9ca2"/>
<rect x="209" y="621.00" width="7" height="1" fill="#9c9ca2"/>
<rect x="209" y="615.80" width="1" height="6.20" fill="#9c9ca2"/>
<rect x="215" y="615.80" width="1" height="6.20" fill="#9c9ca2"/>
<rect x="217" y="622.50" width="7" height="66.50" fill="#33ae3e"/>
<rect x="217" y="622.50" width="7" height="1" fill="#07a220"/>
<rect x="217" y="688.00" width="7" height="1" fill="#07a220"/>
<rect x="217" y="622.50" width="1" height="66.50" fill="#07a220"/>
<rect x="217" y="620.30" width="7" height="2.20" fill="#fcd000"/>
<rect x="217" y="620.30" width="7" height="1" fill="#f6c200"/>
<rect x="217" y="621.50" width="7" height="1" fill="#f6c200"/>
<rect x="217" y="620.30" width="1" height="2.20" fill="#f6c200"/>
<rect x="217" y="619.20" width="7" height="1.10" fill="#fa4208"/>
<rect x="217" y="619.20" width="7" height="1" fill="#ff1800"/>
<rect x="217" y="619.20" width="1" height="1.10" fill="#ff1800"/>
<rect x="217" y="614.20" width="7" height="5.00" fill="#a9aaaf"/>
<rect x="217" y="614.20" width="7" height="1" fill="#9c9ca2"/>
<rect x="217" y="618.20" width="7" height="1" fill="#9c9ca2"/>
<rect x="217" y="614.20" width="1" height="5.00" fill="#9c9ca2"/>
<rect x="232" y="611.0" width="1" height="78.0" fill="#c2e2c3"/>
<rect x="224" y="625.80" width="8" height="63.20" fill="#33ae3e"/>
<rect x="224" y="625.80" width="8" height="1" fill="#07a220"/>
<rect x="224" y="688.00" width="8" height="1" fill="#07a220"/>
<rect x="231" y="625.80" width="1" height="63.20" fill="#07a220"/>
<rect x="224" y="622.50" width="8" height="3.30" fill="#fcd000"/>
<rect x="224" y="622.50" width="8" height="1" fill="#f6c200"/>
<rect x="224" y="624.80" width="8" height="1" fill="#f6c200"/>
<rect x="231" y="622.50" width="1" height="3.30" fill="#f6c200"/>
<rect x="224" y="618.30" width="8" height="4.20" fill="#fa4208"/>
<rect x="224" y="618.30" width="8" height="1" fill="#ff1800"/>
<rect x="224" y="621.50" width="8" height="1" fill="#ff1800"/>
<rect x="231" y="618.30" width="1" height="4.20" fill="#ff1800"/>
<rect x="224" y="610.00" width="8" height="8.30" fill="#a9aaaf"/>
<rect x="224" y="610.00" width="8" height="1" fill="#9c9ca2"/>
<rect x="224" y="617.30" width="8" height="1" fill="#9c9ca2"/>
<rect x="231" y="610.00" width="1" height="8.30" fill="#9c9ca2"/>
<rect x="240" y="612.7" width="1" height="76.3" fill="#c2e2c3"/>
<rect x="233" y="613.00" width="7" height="76.00" fill="#33ae3e"/>
<rect x="233" y="613.00" width="7" height="1" fill="#07a220"/>
<rect x="233" y="688.00" width="7" height="1" fill="#07a220"/>
<rect x="233" y="613.00" width="1" height="76.00" fill="#07a220"/>
<rect x="239" y="613.00" width="1" height="76.00" fill="#07a220"/>
<rect x="233" y="610.00" width="7" height="3.00" fill="#fcd000"/>
<rect x="233" y="610.00" width="7" height="1" fill="#f6c200"/>
<rect x="233" y="612.00" width="7" height="1" fill="#f6c200"/>
<rect x="233" y="610.00" width="1" height="3.00" fill="#f6c200"/>
<rect x="239" y="610.00" width="1" height="3.00" fill="#f6c200"/>
<rect x="233" y="604.70" width="7" height="5.30" fill="#fa4208"/>
<rect x="233" y="604.70" width="7" height="1" fill="#ff1800"/>
<rect x="233" y="609.00" width="7" height="1" fill="#ff1800"/>
<rect x="233" y="604.70" width="1" height="5.30" fill="#ff1800"/>
<rect x="239" y="604.70" width="1" height="5.30" fill="#ff1800"/>
<rect x="233" y="600.00" width="7" height="4.70" fill="#e0000c"/>
<rect x="233" y="600.00" width="7" height="1" fill="#d10000"/>
<rect x="233" y="603.70" width="7" height="1" fill="#d10000"/>
<rect x="233" y="600.00" width="1" height="4.70" fill="#d10000"/>
<rect x="239" y="600.00" width="1" height="4.70" fill="#d10000"/>
<rect x="233" y="598.70" width="7" height="1.30" fill="#a9aaaf"/>
<rect x="233" y="598.70" width="7" height="1" fill="#9c9ca2"/>
<rect x="233" y="598.70" width="1" height="1.30" fill="#9c9ca2"/>
<rect x="239" y="598.70" width="1" height="1.30" fill="#9c9ca2"/>
<rect x="248" y="614.0" width="1" height="75.0" fill="#c2e2c3"/>
<rect x="241" y="628.70" width="7" height="60.30" fill="#33ae3e"/>
<rect x="241" y="628.70" width="7" height="1" fill="#07a220"/>
<rect x="241" y="688.00" width="7" height="1" fill="#07a220"/>
<rect x="241" y="628.70" width="1" height="60.30" fill="#07a220"/>
<rect x="247" y="628.70" width="1" height="60.30" fill="#07a220"/>
<rect x="241" y="627.00" width="7" height="1.70" fill="#fcd000"/>
<rect x="241" y="627.00" width="7" height="1" fill="#f6c200"/>
<rect x="241" y="627.70" width="7" height="1" fill="#f6c200"/>
<rect x="241" y="627.00" width="1" height="1.70" fill="#f6c200"/>
<rect x="247" y="627.00" width="1" height="1.70" fill="#f6c200"/>
<rect x="241" y="620.80" width="7" height="6.20" fill="#fa4208"/>
<rect x="241" y="620.80" width="7" height="1" fill="#ff1800"/>
<rect x="241" y="626.00" width="7" height="1" fill="#ff1800"/>
<rect x="241" y="620.80" width="1" height="6.20" fill="#ff1800"/>
<rect x="247" y="620.80" width="1" height="6.20" fill="#ff1800"/>
<rect x="241" y="611.70" width="7" height="9.10" fill="#a9aaaf"/>
<rect x="241" y="611.70" width="7" height="1" fill="#9c9ca2"/>
<rect x="241" y="619.80" width="7" height="1" fill="#9c9ca2"/>
<rect x="241" y="611.70" width="1" height="9.10" fill="#9c9ca2"/>
<rect x="247" y="611.70" width="1" height="9.10" fill="#9c9ca2"/>
<rect x="256" y="623.5" width="1" height="65.5" fill="#c2e2c3"/>
<rect x="249" y="618.00" width="7" height="71.00" fill="#33ae3e"/>
<rect x="249" y="618.00" width="7" height="1" fill="#07a220"/>
<rect x="249" y="688.00" width="7" height="1" fill="#07a220"/>
<rect x="249" y="618.00" width="1" height="71.00" fill="#07a220"/>
<rect x="255" y="618.00" width="1" height="71.00" fill="#07a220"/>
<rect x="249" y="613.00" width="7" height="5.00" fill="#a9aaaf"/>
<rect x="249" y="613.00" width="7" height="1" fill="#9c9ca2"/>
<rect x="249" y="617.00" width="7" height="1" fill="#9c9ca2"/>
<rect x="249" y="613.00" width="1" height="5.00" fill="#9c9ca2"/>
<rect x="255" y="613.00" width="1" height="5.00" fill="#9c9ca2"/>
<rect x="257" y="631.20" width="7" height="57.80" fill="#33ae3e"/>
<rect x="257" y="631.20" width="7" height="1" fill="#07a220"/>
<rect x="257" y="688.00" width="7" height="1" fill="#07a220"/>
<rect x="257" y="631.20" width="1" height="57.80" fill="#07a220"/>
<rect x="257" y="622.50" width="7" height="8.70" fill="#a9aaaf"/>
<rect x="257" y="622.50" width="7" height="1" fill="#9c9ca2"/>
<rect x="257" y="630.20" width="7" height="1" fill="#9c9ca2"/>
<rect x="257" y="622.50" width="1" height="8.70" fill="#9c9ca2"/>
<rect x="271" y="620.2" width="1" height="68.8" fill="#c2e2c3"/>
<rect x="264" y="624.70" width="7" height="64.30" fill="#33ae3e"/>
<rect x="264" y="624.70" width="7" height="1" fill="#07a220"/>
<rect x="264" y="688.00" width="7" height="1" fill="#07a220"/>
<rect x="270" y="624.70" width="1" height="64.30" fill="#07a220"/>
<rect x="264" y="618.00" width="7" height="6.70" fill="#a9aaaf"/>
<rect x="264" y="618.00" width="7" height="1" fill="#9c9ca2"/>
<rect x="264" y="623.70" width="7" height="1" fill="#9c9ca2"/>
<rect x="270" y="618.00" width="1" height="6.70" fill="#9c9ca2"/>
<rect x="279" y="620.2" width="1" height="68.8" fill="#c2e2c3"/>
<rect x="272" y="627.50" width="7" height="61.50" fill="#33ae3e"/>
<rect x="272" y="627.50" width="7" height="1" fill="#07a220"/>
<rect x="272" y="688.00" width="7" height="1" fill="#07a220"/>
<rect x="272" y="627.50" width="1" height="61.50" fill="#07a220"/>
<rect x="278" y="627.50" width="1" height="61.50" fill="#07a220"/>
<rect x="272" y="619.20" width="7" height="8.30" fill="#a9aaaf"/>
<rect x="272" y="619.20" width="7" height="1" fill="#9c9ca2"/>
<rect x="272" y="626.50" width="7" height="1" fill="#9c9ca2"/>
<rect x="272" y="619.20" width="1" height="8.30" fill="#9c9ca2"/>
<rect x="278" y="619.20" width="1" height="8.30" fill="#9c9ca2"/>
<rect x="287" y="619.0" width="1" height="70.0" fill="#c2e2c3"/>
<rect x="280" y="626.20" width="7" height="62.80" fill="#33ae3e"/>
<rect x="280" y="626.20" width="7" height="1" fill="#07a220"/>
<rect x="280" y="688.00" width="7" height="1" fill="#07a220"/>
<rect x="280" y="626.20" width="1" height="62.80" fill="#07a220"/>
<rect x="286" y="626.20" width="1" height="62.80" fill="#07a220"/>
<rect x="280" y="622.00" width="7" height="4.20" fill="#e0000c"/>
<rect x="280" y="622.00" width="7" height="1" fill="#d10000"/>
<rect x="280" y="625.20" width="7" height="1" fill="#d10000"/>
<rect x="280" y="622.00" width="1" height="4.20" fill="#d10000"/>
<rect x="286" y="622.00" width="1" height="4.20" fill="#d10000"/>
<rect x="280" y="614.20" width="7" height="7.80" fill="#a9aaaf"/>
<rect x="280" y="614.20" width="7" height="1" fill="#9c9ca2"/>
<rect x="280" y="621.00" width="7" height="1" fill="#9c9ca2"/>
<rect x="280" y="614.20" width="1" height="7.80" fill="#9c9ca2"/>
<rect x="286" y="614.20" width="1" height="7.80" fill="#9c9ca2"/>
<rect x="295" y="628.5" width="1" height="60.5" fill="#c2e2c3"/>
<rect x="288" y="628.70" width="7" height="60.30" fill="#33ae3e"/>
<rect x="288" y="628.70" width="7" height="1" fill="#07a220"/>
<rect x="288" y="688.00" width="7" height="1" fill="#07a220"/>
<rect x="288" y="628.70" width="1" height="60.30" fill="#07a220"/>
<rect x="294" y="628.70" width="1" height="60.30" fill="#07a220"/>
<rect x="288" y="626.70" width="7" height="2.00" fill="#fcd000"/>
<rect x="288" y="626.70" width="7" height="1" fill="#f6c200"/>
<rect x="288" y="627.70" width="7" height="1" fill="#f6c200"/>
<rect x="288" y="626.70" width="1" height="2.00" fill="#f6c200"/>
<rect x="294" y="626.70" width="1" height="2.00" fill="#f6c200"/>
<rect x="288" y="624.20" width="7" height="2.50" fill="#fa4208"/>
<rect x="288" y="624.20" width="7" height="1" fill="#ff1800"/>
<rect x="288" y="625.70" width="7" height="1" fill="#ff1800"/>
<rect x="288" y="624.20" width="1" height="2.50" fill="#ff1800"/>
<rect x="294" y="624.20" width="1" height="2.50" fill="#ff1800"/>
<rect x="288" y="618.00" width="7" height="6.20" fill="#a9aaaf"/>
<rect x="288" y="618.00" width="7" height="1" fill="#9c9ca2"/>
<rect x="288" y="623.20" width="7" height="1" fill="#9c9ca2"/>
<rect x="288" y="618.00" width="1" height="6.20" fill="#9c9ca2"/>
<rect x="294" y="618.00" width="1" height="6.20" fill="#9c9ca2"/>
<rect x="303" y="628.5" width="1" height="60.5" fill="#c2e2c3"/>
<rect x="296" y="632.50" width="7" height="56.50" fill="#33ae3e"/>
<rect x="296" y="632.50" width="7" height="1" fill="#07a220"/>
<rect x="296" y="688.00" width="7" height="1" fill="#07a220"/>
<rect x="296" y="632.50" width="1" height="56.50" fill="#07a220"/>
<rect x="302" y="632.50" width="1" height="56.50" fill="#07a220"/>
<rect x="296" y="630.80" width="7" height="1.70" fill="#e0000c"/>
<rect x="296" y="630.80" width="7" height="1" fill="#d10000"/>
<rect x="296" y="631.50" width="7" height="1" fill="#d10000"/>
<rect x="296" y="630.80" width="1" height="1.70" fill="#d10000"/>
<rect x="302" y="630.80" width="1" height="1.70" fill="#d10000"/>
<rect x="296" y="627.50" width="7" height="3.30" fill="#a9aaaf"/>
<rect x="296" y="627.50" width="7" height="1" fill="#9c9ca2"/>
<rect x="296" y="629.80" width="7" height="1" fill="#9c9ca2"/>
<rect x="296" y="627.50" width="1" height="3.30" fill="#9c9ca2"/>
<rect x="302" y="627.50" width="1" height="3.30" fill="#9c9ca2"/>
<rect x="304" y="628.70" width="7" height="60.30" fill="#33ae3e"/>
<rect x="304" y="628.70" width="7" height="1" fill="#07a220"/>
<rect x="304" y="688.00" width="7" height="1" fill="#07a220"/>
<rect x="304" y="628.70" width="1" height="60.30" fill="#07a220"/>
<rect x="304" y="626.70" width="7" height="2.00" fill="#e0000c"/>
<rect x="304" y="626.70" width="7" height="1" fill="#d10000"/>
<rect x="304" y="627.70" width="7" height="1" fill="#d10000"/>
<rect x="304" y="626.70" width="1" height="2.00" fill="#d10000"/>
<rect x="304" y="619.20" width="7" height="7.50" fill="#a9aaaf"/>
<rect x="304" y="619.20" width="7" height="1" fill="#9c9ca2"/>
<rect x="304" y="625.70" width="7" height="1" fill="#9c9ca2"/>
<rect x="304" y="619.20" width="1" height="7.50" fill="#9c9ca2"/>
<rect x="318" y="619.0" width="1" height="70.0" fill="#c2e2c3"/>
<rect x="311" y="619.70" width="7" height="69.30" fill="#33ae3e"/>
<rect x="311" y="619.70" width="7" height="1" fill="#07a220"/>
<rect x="311" y="688.00" width="7" height="1" fill="#07a220"/>
<rect x="317" y="619.70" width="1" height="69.30" fill="#07a220"/>
<rect x="311" y="614.20" width="7" height="5.50" fill="#a9aaaf"/>
<rect x="311" y="614.20" width="7" height="1" fill="#9c9ca2"/>
<rect x="311" y="618.70" width="7" height="1" fill="#9c9ca2"/>
<rect x="317" y="614.20" width="1" height="5.50" fill="#9c9ca2"/>
<rect x="326" y="628.5" width="1" height="60.5" fill="#c2e2c3"/>
<rect x="319" y="622.50" width="7" height="66.50" fill="#33ae3e"/>
<rect x="319" y="622.50" width="7" height="1" fill="#07a220"/>
<rect x="319" y="688.00" width="7" height="1" fill="#07a220"/>
<rect x="319" y="622.50" width="1" height="66.50" fill="#07a220"/>
<rect x="325" y="622.50" width="1" height="66.50" fill="#07a220"/>
<rect x="319" y="618.00" width="7" height="4.50" fill="#a9aaaf"/>
<rect x="319" y="618.00" width="7" height="1" fill="#9c9ca2"/>
<rect x="319" y="621.50" width="7" height="1" fill="#9c9ca2"/>
<rect x="319" y="618.00" width="1" height="4.50" fill="#9c9ca2"/>
<rect x="325" y="618.00" width="1" height="4.50" fill="#9c9ca2"/>
<rect x="334" y="628.5" width="1" height="60.5" fill="#c2e2c3"/>
<rect x="327" y="641.70" width="7" height="47.30" fill="#33ae3e"/>
<rect x="327" y="641.70" width="7" height="1" fill="#07a220"/>
<rect x="327" y="688.00" width="7" height="1" fill="#07a220"/>
<rect x="327" y="641.70" width="1" height="47.30" fill="#07a220"/>
<rect x="333" y="641.70" width="1" height="47.30" fill="#07a220"/>
<rect x="327" y="640.00" width="7" height="1.70" fill="#fcd000"/>
<rect x="327" y="640.00" width="7" height="1" fill="#f6c200"/>
<rect x="327" y="640.70" width="7" height="1" fill="#f6c200"/>
<rect x="327" y="640.00" width="1" height="1.70" fill="#f6c200"/>
<rect x="333" y="640.00" width="1" height="1.70" fill="#f6c200"/>
<rect x="327" y="637.50" width="7" height="2.50" fill="#fa4208"/>
<rect x="327" y="637.50" width="7" height="1" fill="#ff1800"/>
<rect x="327" y="639.00" width="7" height="1" fill="#ff1800"/>
<rect x="327" y="637.50" width="1" height="2.50" fill="#ff1800"/>
<rect x="333" y="637.50" width="1" height="2.50" fill="#ff1800"/>
<rect x="327" y="627.50" width="7" height="10.00" fill="#a9aaaf"/>
<rect x="327" y="627.50" width="7" height="1" fill="#9c9ca2"/>
<rect x="327" y="636.50" width="7" height="1" fill="#9c9ca2"/>
<rect x="327" y="627.50" width="1" height="10.00" fill="#9c9ca2"/>
<rect x="333" y="627.50" width="1" height="10.00" fill="#9c9ca2"/>
<rect x="342" y="623.6" width="1" height="65.4" fill="#c2e2c3"/>
<rect x="335" y="615.80" width="7" height="73.20" fill="#33ae3e"/>
<rect x="335" y="615.80" width="7" height="1" fill="#07a220"/>
<rect x="335" y="688.00" width="7" height="1" fill="#07a220"/>
<rect x="335" y="615.80" width="1" height="73.20" fill="#07a220"/>
<rect x="341" y="615.80" width="1" height="73.20" fill="#07a220"/>
<rect x="335" y="613.70" width="7" height="2.10" fill="#fa4208"/>
<rect x="335" y="613.70" width="7" height="1" fill="#ff1800"/>
<rect x="335" y="614.80" width="7" height="1" fill="#ff1800"/>
<rect x="335" y="613.70" width="1" height="2.10" fill="#ff1800"/>
<rect x="341" y="613.70" width="1" height="2.10" fill="#ff1800"/>
<rect x="335" y="609.70" width="7" height="4.00" fill="#a9aaaf"/>
<rect x="335" y="609.70" width="7" height="1" fill="#9c9ca2"/>
<rect x="335" y="612.70" width="7" height="1" fill="#9c9ca2"/>
<rect x="335" y="609.70" width="1" height="4.00" fill="#9c9ca2"/>
<rect x="341" y="609.70" width="1" height="4.00" fill="#9c9ca2"/>
<rect x="343" y="633.80" width="7" height="55.20" fill="#33ae3e"/>
<rect x="343" y="633.80" width="7" height="1" fill="#07a220"/>
<rect x="343" y="688.00" width="7" height="1" fill="#07a220"/>
<rect x="343" y="633.80" width="1" height="55.20" fill="#07a220"/>
<rect x="343" y="632.00" width="7" height="1.80" fill="#fcd000"/>
<rect x="343" y="632.00" width="7" height="1" fill="#f6c200"/>
<rect x="343" y="632.80" width="7" height="1" fill="#f6c200"/>
<rect x="343" y="632.00" width="1" height="1.80" fill="#f6c200"/>
<rect x="343" y="629.00" width="7" height="3.00" fill="#fa4208"/>
<rect x="343" y="629.00" width="7" height="1" fill="#ff1800"/>
<rect x="343" y="631.00" width="7" height="1" fill="#ff1800"/>
<rect x="343" y="629.00" width="1" height="3.00" fill="#ff1800"/>
<rect x="343" y="622.60" width="7" height="6.40" fill="#a9aaaf"/>
<rect x="343" y="622.60" width="7" height="1" fill="#9c9ca2"/>
<rect x="343" y="628.00" width="7" height="1" fill="#9c9ca2"/>
<rect x="343" y="622.60" width="1" height="6.40" fill="#9c9ca2"/>
<rect x="358" y="619.3" width="1" height="69.7" fill="#c2e2c3"/>
<rect x="350" y="620.40" width="8" height="68.60" fill="#33ae3e"/>
<rect x="350" y="620.40" width="8" height="1" fill="#07a220"/>
<rect x="350" y="688.00" width="8" height="1" fill="#07a220"/>
<rect x="357" y="620.40" width="1" height="68.60" fill="#07a220"/>
<rect x="350" y="619.00" width="8" height="1.40" fill="#fa4208"/>
<rect x="350" y="619.00" width="8" height="1" fill="#ff1800"/>
<rect x="357" y="619.00" width="1" height="1.40" fill="#ff1800"/>
<rect x="350" y="616.10" width="8" height="2.90" fill="#a9aaaf"/>
<rect x="350" y="616.10" width="8" height="1" fill="#9c9ca2"/>
<rect x="350" y="618.00" width="8" height="1" fill="#9c9ca2"/>
<rect x="357" y="616.10" width="1" height="2.90" fill="#9c9ca2"/>
<rect x="366" y="619.3" width="1" height="69.7" fill="#c2e2c3"/>
<rect x="359" y="624.80" width="7" height="64.20" fill="#33ae3e"/>
<rect x="359" y="624.80" width="7" height="1" fill="#07a220"/>
<rect x="359" y="688.00" width="7" height="1" fill="#07a220"/>
<rect x="359" y="624.80" width="1" height="64.20" fill="#07a220"/>
<rect x="365" y="624.80" width="1" height="64.20" fill="#07a220"/>
<rect x="359" y="621.90" width="7" height="2.90" fill="#e0000c"/>
<rect x="359" y="621.90" width="7" height="1" fill="#d10000"/>
<rect x="359" y="623.80" width="7" height="1" fill="#d10000"/>
<rect x="359" y="621.90" width="1" height="2.90" fill="#d10000"/>
<rect x="365" y="621.90" width="1" height="2.90" fill="#d10000"/>
<rect x="359" y="618.30" width="7" height="3.60" fill="#a9aaaf"/>
<rect x="359" y="618.30" width="7" height="1" fill="#9c9ca2"/>
<rect x="359" y="620.90" width="7" height="1" fill="#9c9ca2"/>
<rect x="359" y="618.30" width="1" height="3.60" fill="#9c9ca2"/>
<rect x="365" y="618.30" width="1" height="3.60" fill="#9c9ca2"/>
<rect x="374" y="609.1" width="1" height="79.9" fill="#c2e2c3"/>
<rect x="367" y="619.40" width="7" height="69.60" fill="#33ae3e"/>
<rect x="367" y="619.40" width="7" height="1" fill="#07a220"/>
<rect x="367" y="688.00" width="7" height="1" fill="#07a220"/>
<rect x="367" y="619.40" width="1" height="69.60" fill="#07a220"/>
<rect x="373" y="619.40" width="1" height="69.60" fill="#07a220"/>
<rect x="367" y="616.10" width="7" height="3.30" fill="#fa4208"/>
<rect x="367" y="616.10" width="7" height="1" fill="#ff1800"/>
<rect x="367" y="618.40" width="7" height="1" fill="#ff1800"/>
<rect x="367" y="616.10" width="1" height="3.30" fill="#ff1800"/>
<rect x="373" y="616.10" width="1" height="3.30" fill="#ff1800"/>
<rect x="367" y="608.10" width="7" height="8.00" fill="#a9aaaf"/>
<rect x="367" y="608.10" width="7" height="1" fill="#9c9ca2"/>
<rect x="367" y="615.10" width="7" height="1" fill="#9c9ca2"/>
<rect x="367" y="608.10" width="1" height="8.00" fill="#9c9ca2"/>
<rect x="373" y="608.10" width="1" height="8.00" fill="#9c9ca2"/>
<rect x="382" y="612.8" width="1" height="76.2" fill="#c2e2c3"/>
<rect x="375" y="601.60" width="7" height="87.40" fill="#33ae3e"/>
<rect x="375" y="601.60" width="7" height="1" fill="#07a220"/>
<rect x="375" y="688.00" width="7" height="1" fill="#07a220"/>
<rect x="375" y="601.60" width="1" height="87.40" fill="#07a220"/>
<rect x="381" y="601.60" width="1" height="87.40" fill="#07a220"/>
<rect x="375" y="600.00" width="7" height="1.60" fill="#a9aaaf"/>
<rect x="375" y="600.00" width="7" height="1" fill="#9c9ca2"/>
<rect x="375" y="600.60" width="7" height="1" fill="#9c9ca2"/>
<rect x="375" y="600.00" width="1" height="1.60" fill="#9c9ca2"/>
<rect x="381" y="600.00" width="1" height="1.60" fill="#9c9ca2"/>
<rect x="389" y="612.8" width="1" height="76.2" fill="#c2e2c3"/>
<rect x="383" y="620.90" width="6" height="68.10" fill="#33ae3e"/>
<rect x="383" y="620.90" width="6" height="1" fill="#07a220"/>
<rect x="383" y="688.00" width="6" height="1" fill="#07a220"/>
<rect x="383" y="620.90" width="1" height="68.10" fill="#07a220"/>
<rect x="388" y="620.90" width="1" height="68.10" fill="#07a220"/>
<rect x="383" y="619.50" width="6" height="1.40" fill="#e0000c"/>
<rect x="383" y="619.50" width="6" height="1" fill="#d10000"/>
<rect x="383" y="619.50" width="1" height="1.40" fill="#d10000"/>
<rect x="388" y="619.50" width="1" height="1.40" fill="#d10000"/>
<rect x="383" y="611.80" width="6" height="7.70" fill="#a9aaaf"/>
<rect x="383" y="611.80" width="6" height="1" fill="#9c9ca2"/>
<rect x="383" y="618.50" width="6" height="1" fill="#9c9ca2"/>
<rect x="383" y="611.80" width="1" height="7.70" fill="#9c9ca2"/>
<rect x="388" y="611.80" width="1" height="7.70" fill="#9c9ca2"/>
<rect x="390" y="599.50" width="7" height="89.50" fill="#33ae3e"/>
<rect x="390" y="599.50" width="7" height="1" fill="#07a220"/>
<rect x="390" y="688.00" width="7" height="1" fill="#07a220"/>
<rect x="390" y="599.50" width="1" height="89.50" fill="#07a220"/>
<rect x="390" y="598.00" width="7" height="1.50" fill="#a9aaaf"/>
<rect x="390" y="598.00" width="7" height="1" fill="#9c9ca2"/>
<rect x="390" y="598.00" width="1" height="1.50" fill="#9c9ca2"/>
<rect x="405" y="582.5" width="1" height="106.5" fill="#c2e2c3"/>
<rect x="397" y="583.30" width="8" height="105.70" fill="#33ae3e"/>
<rect x="397" y="583.30" width="8" height="1" fill="#07a220"/>
<rect x="397" y="688.00" width="8" height="1" fill="#07a220"/>
<rect x="404" y="583.30" width="1" height="105.70" fill="#07a220"/>
<rect x="397" y="581.50" width="8" height="1.80" fill="#a9aaaf"/>
<rect x="397" y="581.50" width="8" height="1" fill="#9c9ca2"/>
<rect x="397" y="582.30" width="8" height="1" fill="#9c9ca2"/>
<rect x="404" y="581.50" width="1" height="1.80" fill="#9c9ca2"/>
<rect x="413" y="583.6" width="1" height="105.4" fill="#c2e2c3"/>
<rect x="406" y="569.20" width="7" height="119.80" fill="#33ae3e"/>
<rect x="406" y="569.20" width="7" height="1" fill="#07a220"/>
<rect x="406" y="688.00" width="7" height="1" fill="#07a220"/>
<rect x="406" y="569.20" width="1" height="119.80" fill="#07a220"/>
<rect x="412" y="569.20" width="1" height="119.80" fill="#07a220"/>
<rect x="406" y="565.40" width="7" height="3.80" fill="#fa4208"/>
<rect x="406" y="565.40" width="7" height="1" fill="#ff1800"/>
<rect x="406" y="568.20" width="7" height="1" fill="#ff1800"/>
<rect x="406" y="565.40" width="1" height="3.80" fill="#ff1800"/>
<rect x="412" y="565.40" width="1" height="3.80" fill="#ff1800"/>
<rect x="406" y="564.30" width="7" height="1.10" fill="#e0000c"/>
<rect x="406" y="564.30" width="7" height="1" fill="#d10000"/>
<rect x="406" y="564.30" width="1" height="1.10" fill="#d10000"/>
<rect x="412" y="564.30" width="1" height="1.10" fill="#d10000"/>
<rect x="421" y="583.6" width="1" height="105.4" fill="#c2e2c3"/>
<rect x="414" y="588.70" width="7" height="100.30" fill="#33ae3e"/>
<rect x="414" y="588.70" width="7" height="1" fill="#07a220"/>
<rect x="414" y="688.00" width="7" height="1" fill="#07a220"/>
<rect x="414" y="588.70" width="1" height="100.30" fill="#07a220"/>
<rect x="420" y="588.70" width="1" height="100.30" fill="#07a220"/>
<rect x="414" y="587.00" width="7" height="1.70" fill="#fcd000"/>
<rect x="414" y="587.00" width="7" height="1" fill="#f6c200"/>
<rect x="414" y="587.70" width="7" height="1" fill="#f6c200"/>
<rect x="414" y="587.00" width="1" height="1.70" fill="#f6c200"/>
<rect x="420" y="587.00" width="1" height="1.70" fill="#f6c200"/>
<rect x="414" y="582.60" width="7" height="4.40" fill="#a9aaaf"/>
<rect x="414" y="582.60" width="7" height="1" fill="#9c9ca2"/>
<rect x="414" y="586.00" width="7" height="1" fill="#9c9ca2"/>
<rect x="414" y="582.60" width="1" height="4.40" fill="#9c9ca2"/>
<rect x="420" y="582.60" width="1" height="4.40" fill="#9c9ca2"/>
<rect x="429" y="572.8" width="1" height="116.2" fill="#c2e2c3"/>
<rect x="422" y="548.10" width="7" height="140.90" fill="#33ae3e"/>
<rect x="422" y="548.10" width="7" height="1" fill="#07a220"/>
<rect x="422" y="688.00" width="7" height="1" fill="#07a220"/>
<rect x="422" y="548.10" width="1" height="140.90" fill="#07a220"/>
<rect x="428" y="548.10" width="1" height="140.90" fill="#07a220"/>
<rect x="422" y="546.30" width="7" height="1.80" fill="#e0000c"/>
<rect x="422" y="546.30" width="7" height="1" fill="#d10000"/>
<rect x="422" y="547.10" width="7" height="1" fill="#d10000"/>
<rect x="422" y="546.30" width="1" height="1.80" fill="#d10000"/>
<rect x="428" y="546.30" width="1" height="1.80" fill="#d10000"/>
<rect x="430" y="577.40" width="7" height="111.60" fill="#33ae3e"/>
<rect x="430" y="577.40" width="7" height="1" fill="#07a220"/>
<rect x="430" y="688.00" width="7" height="1" fill="#07a220"/>
<rect x="430" y="577.40" width="1" height="111.60" fill="#07a220"/>
<rect x="430" y="573.80" width="7" height="3.60" fill="#fcd000"/>
<rect x="430" y="573.80" width="7" height="1" fill="#f6c200"/>
<rect x="430" y="576.40" width="7" height="1" fill="#f6c200"/>
<rect x="430" y="573.80" width="1" height="3.60" fill="#f6c200"/>
<rect x="430" y="571.80" width="7" height="2.00" fill="#a9aaaf"/>
<rect x="430" y="571.80" width="7" height="1" fill="#9c9ca2"/>
<rect x="430" y="572.80" width="7" height="1" fill="#9c9ca2"/>
<rect x="430" y="571.80" width="1" height="2.00" fill="#9c9ca2"/>
<rect x="444" y="560.2" width="1" height="128.8" fill="#c2e2c3"/>
<rect x="437" y="564.00" width="7" height="125.00" fill="#33ae3e"/>
<rect x="437" y="564.00" width="7" height="1" fill="#07a220"/>
<rect x="437" y="688.00" width="7" height="1" fill="#07a220"/>
<rect x="443" y="564.00" width="1" height="125.00" fill="#07a220"/>
<rect x="437" y="561.50" width="7" height="2.50" fill="#fa4208"/>
<rect x="437" y="561.50" width="7" height="1" fill="#ff1800"/>
<rect x="437" y="563.00" width="7" height="1" fill="#ff1800"/>
<rect x="443" y="561.50" width="1" height="2.50" fill="#ff1800"/>
<rect x="437" y="559.20" width="7" height="2.30" fill="#a9aaaf"/>
<rect x="437" y="559.20" width="7" height="1" fill="#9c9ca2"/>
<rect x="437" y="560.50" width="7" height="1" fill="#9c9ca2"/>
<rect x="443" y="559.20" width="1" height="2.30" fill="#9c9ca2"/>
<rect x="452" y="558.3" width="1" height="130.7" fill="#c2e2c3"/>
<rect x="445" y="556.60" width="7" height="132.40" fill="#33ae3e"/>
<rect x="445" y="556.60" width="7" height="1" fill="#07a220"/>
<rect x="445" y="688.00" width="7" height="1" fill="#07a220"/>
<rect x="445" y="556.60" width="1" height="132.40" fill="#07a220"/>
<rect x="451" y="556.60" width="1" height="132.40" fill="#07a220"/>
<rect x="445" y="556.00" width="7" height="0.60" fill="#a9aaaf"/>
<rect x="445" y="556.00" width="7" height="1" fill="#9c9ca2"/>
<rect x="445" y="556.00" width="1" height="0.60" fill="#9c9ca2"/>
<rect x="451" y="556.00" width="1" height="0.60" fill="#9c9ca2"/>
<rect x="460" y="570.4" width="1" height="118.6" fill="#c2e2c3"/>
<rect x="453" y="559.00" width="7" height="130.00" fill="#33ae3e"/>
<rect x="453" y="559.00" width="7" height="1" fill="#07a220"/>
<rect x="453" y="688.00" width="7" height="1" fill="#07a220"/>
<rect x="453" y="559.00" width="1" height="130.00" fill="#07a220"/>
<rect x="459" y="559.00" width="1" height="130.00" fill="#07a220"/>
<rect x="453" y="557.30" width="7" height="1.70" fill="#e0000c"/>
<rect x="453" y="557.30" width="7" height="1" fill="#d10000"/>
<rect x="453" y="558.00" width="7" height="1" fill="#d10000"/>
<rect x="453" y="557.30" width="1" height="1.70" fill="#d10000"/>
<rect x="459" y="557.30" width="1" height="1.70" fill="#d10000"/>
<rect x="468" y="570.4" width="1" height="118.6" fill="#c2e2c3"/>
<rect x="461" y="575.90" width="7" height="113.10" fill="#33ae3e"/>
<rect x="461" y="575.90" width="7" height="1" fill="#07a220"/>
<rect x="461" y="688.00" width="7" height="1" fill="#07a220"/>
<rect x="461" y="575.90" width="1" height="113.10" fill="#07a220"/>
<rect x="467" y="575.90" width="1" height="113.10" fill="#07a220"/>
<rect x="461" y="573.50" width="7" height="2.40" fill="#fcd000"/>
<rect x="461" y="573.50" width="7" height="1" fill="#f6c200"/>
<rect x="461" y="574.90" width="7" height="1" fill="#f6c200"/>
<rect x="461" y="573.50" width="1" height="2.40" fill="#f6c200"/>
<rect x="467" y="573.50" width="1" height="2.40" fill="#f6c200"/>
<rect x="461" y="570.60" width="7" height="2.90" fill="#fa4208"/>
<rect x="461" y="570.60" width="7" height="1" fill="#ff1800"/>
<rect x="461" y="572.50" width="7" height="1" fill="#ff1800"/>
<rect x="461" y="570.60" width="1" height="2.90" fill="#ff1800"/>
<rect x="467" y="570.60" width="1" height="2.90" fill="#ff1800"/>
<rect x="461" y="569.40" width="7" height="1.20" fill="#a9aaaf"/>
<rect x="461" y="569.40" width="7" height="1" fill="#9c9ca2"/>
<rect x="461" y="569.40" width="1" height="1.20" fill="#9c9ca2"/>
<rect x="467" y="569.40" width="1" height="1.20" fill="#9c9ca2"/>
<rect x="476" y="555.9" width="1" height="133.1" fill="#c2e2c3"/>
<rect x="469" y="551.10" width="7" height="137.90" fill="#33ae3e"/>
<rect x="469" y="551.10" width="7" height="1" fill="#07a220"/>
<rect x="469" y="688.00" width="7" height="1" fill="#07a220"/>
<rect x="469" y="551.10" width="1" height="137.90" fill="#07a220"/>
<rect x="475" y="551.10" width="1" height="137.90" fill="#07a220"/>
<rect x="469" y="548.20" width="7" height="2.90" fill="#fa4208"/>
<rect x="469" y="548.20" width="7" height="1" fill="#ff1800"/>
<rect x="469" y="550.10" width="7" height="1" fill="#ff1800"/>
<rect x="469" y="548.20" width="1" height="2.90" fill="#ff1800"/>
<rect x="475" y="548.20" width="1" height="2.90" fill="#ff1800"/>
<rect x="477" y="562.70" width="7" height="126.30" fill="#33ae3e"/>
<rect x="477" y="562.70" width="7" height="1" fill="#07a220"/>
<rect x="477" y="688.00" width="7" height="1" fill="#07a220"/>
<rect x="477" y="562.70" width="1" height="126.30" fill="#07a220"/>
<rect x="477" y="556.60" width="7" height="6.10" fill="#fa4208"/>
<rect x="477" y="556.60" width="7" height="1" fill="#ff1800"/>
<rect x="477" y="561.70" width="7" height="1" fill="#ff1800"/>
<rect x="477" y="556.60" width="1" height="6.10" fill="#ff1800"/>
<rect x="477" y="554.90" width="7" height="1.70" fill="#a9aaaf"/>
<rect x="477" y="554.90" width="7" height="1" fill="#9c9ca2"/>
<rect x="477" y="555.60" width="7" height="1" fill="#9c9ca2"/>
<rect x="477" y="554.90" width="1" height="1.70" fill="#9c9ca2"/>
<rect x="491" y="555.9" width="1" height="133.1" fill="#c2e2c3"/>
<rect x="484" y="533.70" width="7" height="155.30" fill="#33ae3e"/>
<rect x="484" y="533.70" width="7" height="1" fill="#07a220"/>
<rect x="484" y="688.00" width="7" height="1" fill="#07a220"/>
<rect x="490" y="533.70" width="1" height="155.30" fill="#07a220"/>
<rect x="484" y="530.10" width="7" height="3.60" fill="#fa4208"/>
<rect x="484" y="530.10" width="7" height="1" fill="#ff1800"/>
<rect x="484" y="532.70" width="7" height="1" fill="#ff1800"/>
<rect x="490" y="530.10" width="1" height="3.60" fill="#ff1800"/>
<rect x="499" y="555.9" width="1" height="133.1" fill="#c2e2c3"/>
<rect x="492" y="554.90" width="7" height="134.10" fill="#33ae3e"/>
<rect x="492" y="554.90" width="7" height="1" fill="#07a220"/>
<rect x="492" y="688.00" width="7" height="1" fill="#07a220"/>
<rect x="492" y="554.90" width="1" height="134.10" fill="#07a220"/>
<rect x="498" y="554.90" width="1" height="134.10" fill="#07a220"/>
<rect x="507" y="544.4" width="1" height="144.6" fill="#c2e2c3"/>
<rect x="500" y="548.20" width="7" height="140.80" fill="#33ae3e"/>
<rect x="500" y="548.20" width="7" height="1" fill="#07a220"/>
<rect x="500" y="688.00" width="7" height="1" fill="#07a220"/>
<rect x="500" y="548.20" width="1" height="140.80" fill="#07a220"/>
<rect x="506" y="548.20" width="1" height="140.80" fill="#07a220"/>
<rect x="500" y="543.40" width="7" height="4.80" fill="#fa4208"/>
<rect x="500" y="543.40" width="7" height="1" fill="#ff1800"/>
<rect x="500" y="547.20" width="7" height="1" fill="#ff1800"/>
<rect x="500" y="543.40" width="1" height="4.80" fill="#ff1800"/>
<rect x="506" y="543.40" width="1" height="4.80" fill="#ff1800"/>
<rect x="515" y="528.0" width="1" height="161.0" fill="#c2e2c3"/>
<rect x="508" y="528.90" width="7" height="160.10" fill="#33ae3e"/>
<rect x="508" y="528.90" width="7" height="1" fill="#07a220"/>
<rect x="508" y="688.00" width="7" height="1" fill="#07a220"/>
<rect x="508" y="528.90" width="1" height="160.10" fill="#07a220"/>
<rect x="514" y="528.90" width="1" height="160.10" fill="#07a220"/>
<rect x="508" y="527.00" width="7" height="1.90" fill="#fcd000"/>
<rect x="508" y="527.00" width="7" height="1" fill="#f6c200"/>
<rect x="508" y="527.90" width="7" height="1" fill="#f6c200"/>
<rect x="508" y="527.00" width="1" height="1.90" fill="#f6c200"/>
<rect x="514" y="527.00" width="1" height="1.90" fill="#f6c200"/>
<rect x="516" y="528.90" width="7" height="160.10" fill="#33ae3e"/>
<rect x="516" y="528.90" width="7" height="1" fill="#07a220"/>
<rect x="516" y="688.00" width="7" height="1" fill="#07a220"/>
<rect x="516" y="528.90" width="1" height="160.10" fill="#07a220"/>
<rect x="516" y="527.20" width="7" height="1.70" fill="#fcd000"/>
<rect x="516" y="527.20" width="7" height="1" fill="#f6c200"/>
<rect x="516" y="527.90" width="7" height="1" fill="#f6c200"/>
<rect x="516" y="527.20" width="1" height="1.70" fill="#f6c200"/>
<rect x="516" y="522.20" width="7" height="5.00" fill="#fa4208"/>
<rect x="516" y="522.20" width="7" height="1" fill="#ff1800"/>
<rect x="516" y="526.20" width="7" height="1" fill="#ff1800"/>
<rect x="516" y="522.20" width="1" height="5.00" fill="#ff1800"/>
<rect x="530" y="528.0" width="1" height="161.0" fill="#c2e2c3"/>
<rect x="523" y="530.10" width="7" height="158.90" fill="#33ae3e"/>
<rect x="523" y="530.10" width="7" height="1" fill="#07a220"/>
<rect x="523" y="688.00" width="7" height="1" fill="#07a220"/>
<rect x="529" y="530.10" width="1" height="158.90" fill="#07a220"/>
<rect x="523" y="520.50" width="7" height="9.60" fill="#fa4208"/>
<rect x="523" y="520.50" width="7" height="1" fill="#ff1800"/>
<rect x="523" y="529.10" width="7" height="1" fill="#ff1800"/>
<rect x="529" y="520.50" width="1" height="9.60" fill="#ff1800"/>
<rect x="538" y="528.0" width="1" height="161.0" fill="#c2e2c3"/>
<rect x="531" y="531.80" width="7" height="157.20" fill="#33ae3e"/>
<rect x="531" y="531.80" width="7" height="1" fill="#07a220"/>
<rect x="531" y="688.00" width="7" height="1" fill="#07a220"/>
<rect x="531" y="531.80" width="1" height="157.20" fill="#07a220"/>
<rect x="537" y="531.80" width="1" height="157.20" fill="#07a220"/>
<rect x="531" y="530.10" width="7" height="1.70" fill="#fcd000"/>
<rect x="531" y="530.10" width="7" height="1" fill="#f6c200"/>
<rect x="531" y="530.80" width="7" height="1" fill="#f6c200"/>
<rect x="531" y="530.10" width="1" height="1.70" fill="#f6c200"/>
<rect x="537" y="530.10" width="1" height="1.70" fill="#f6c200"/>
<rect x="531" y="527.00" width="7" height="3.10" fill="#e0000c"/>
<rect x="531" y="527.00" width="7" height="1" fill="#d10000"/>
<rect x="531" y="529.10" width="7" height="1" fill="#d10000"/>
<rect x="531" y="527.00" width="1" height="3.10" fill="#d10000"/>
<rect x="537" y="527.00" width="1" height="3.10" fill="#d10000"/>
<rect x="546" y="525.6" width="1" height="163.4" fill="#c2e2c3"/>
<rect x="539" y="518.00" width="7" height="171.00" fill="#33ae3e"/>
<rect x="539" y="518.00" width="7" height="1" fill="#07a220"/>
<rect x="539" y="688.00" width="7" height="1" fill="#07a220"/>
<rect x="539" y="518.00" width="1" height="171.00" fill="#07a220"/>
<rect x="545" y="518.00" width="1" height="171.00" fill="#07a220"/>
<rect x="539" y="516.90" width="7" height="1.10" fill="#e0000c"/>
<rect x="539" y="516.90" width="7" height="1" fill="#d10000"/>
<rect x="539" y="516.90" width="1" height="1.10" fill="#d10000"/>
<rect x="545" y="516.90" width="1" height="1.10" fill="#d10000"/>
<rect x="554" y="525.6" width="1" height="163.4" fill="#c2e2c3"/>
<rect x="547" y="527.00" width="7" height="162.00" fill="#33ae3e"/>
<rect x="547" y="527.00" width="7" height="1" fill="#07a220"/>
<rect x="547" y="688.00" width="7" height="1" fill="#07a220"/>
<rect x="547" y="527.00" width="1" height="162.00" fill="#07a220"/>
<rect x="553" y="527.00" width="1" height="162.00" fill="#07a220"/>
<rect x="547" y="524.60" width="7" height="2.40" fill="#fcd000"/>
<rect x="547" y="524.60" width="7" height="1" fill="#f6c200"/>
<rect x="547" y="526.00" width="7" height="1" fill="#f6c200"/>
<rect x="547" y="524.60" width="1" height="2.40" fill="#f6c200"/>
<rect x="553" y="524.60" width="1" height="2.40" fill="#f6c200"/>
<rect x="562" y="519.0" width="1" height="170.0" fill="#c2e2c3"/>
<rect x="555" y="518.00" width="7" height="171.00" fill="#33ae3e"/>
<rect x="555" y="518.00" width="7" height="1" fill="#07a220"/>
<rect x="555" y="688.00" width="7" height="1" fill="#07a220"/>
<rect x="555" y="518.00" width="1" height="171.00" fill="#07a220"/>
<rect x="561" y="518.00" width="1" height="171.00" fill="#07a220"/>
<rect x="563" y="516.90" width="7" height="172.10" fill="#33ae3e"/>
<rect x="563" y="516.90" width="7" height="1" fill="#07a220"/>
<rect x="563" y="688.00" width="7" height="1" fill="#07a220"/>
<rect x="563" y="516.90" width="1" height="172.10" fill="#07a220"/>
<rect x="563" y="515.20" width="7" height="1.70" fill="#fcd000"/>
<rect x="563" y="515.20" width="7" height="1" fill="#f6c200"/>
<rect x="563" y="515.90" width="7" height="1" fill="#f6c200"/>
<rect x="563" y="515.20" width="1" height="1.70" fill="#f6c200"/>
<rect x="578" y="524.4" width="1" height="164.6" fill="#c2e2c3"/>
<rect x="570" y="530.10" width="8" height="158.90" fill="#33ae3e"/>
<rect x="570" y="530.10" width="8" height="1" fill="#07a220"/>
<rect x="570" y="688.00" width="8" height="1" fill="#07a220"/>
<rect x="577" y="530.10" width="1" height="158.90" fill="#07a220"/>
<rect x="570" y="524.10" width="8" height="6.00" fill="#fcd000"/>
<rect x="570" y="524.10" width="8" height="1" fill="#f6c200"/>
<rect x="570" y="529.10" width="8" height="1" fill="#f6c200"/>
<rect x="577" y="524.10" width="1" height="6.00" fill="#f6c200"/>
<rect x="570" y="523.40" width="8" height="0.70" fill="#a9aaaf"/>
<rect x="570" y="523.40" width="8" height="1" fill="#9c9ca2"/>
<rect x="577" y="523.40" width="1" height="0.70" fill="#9c9ca2"/>
<rect x="586" y="541.2" width="1" height="147.8" fill="#c2e2c3"/>
<rect x="579" y="524.80" width="7" height="164.20" fill="#33ae3e"/>
<rect x="579" y="524.80" width="7" height="1" fill="#07a220"/>
<rect x="579" y="688.00" width="7" height="1" fill="#07a220"/>
<rect x="579" y="524.80" width="1" height="164.20" fill="#07a220"/>
<rect x="585" y="524.80" width="1" height="164.20" fill="#07a220"/>
<rect x="579" y="521.70" width="7" height="3.10" fill="#fcd000"/>
<rect x="579" y="521.70" width="7" height="1" fill="#f6c200"/>
<rect x="579" y="523.80" width="7" height="1" fill="#f6c200"/>
<rect x="579" y="521.70" width="1" height="3.10" fill="#f6c200"/>
<rect x="585" y="521.70" width="1" height="3.10" fill="#f6c200"/>
<rect x="579" y="518.00" width="7" height="3.70" fill="#e0000c"/>
<rect x="579" y="518.00" width="7" height="1" fill="#d10000"/>
<rect x="579" y="520.70" width="7" height="1" fill="#d10000"/>
<rect x="579" y="518.00" width="1" height="3.70" fill="#d10000"/>
<rect x="585" y="518.00" width="1" height="3.70" fill="#d10000"/>
<rect x="594" y="541.2" width="1" height="147.8" fill="#c2e2c3"/>
<rect x="587" y="548.20" width="7" height="140.80" fill="#33ae3e"/>
<rect x="587" y="548.20" width="7" height="1" fill="#07a220"/>
<rect x="587" y="688.00" width="7" height="1" fill="#07a220"/>
<rect x="587" y="548.20" width="1" height="140.80" fill="#07a220"/>
<rect x="593" y="548.20" width="1" height="140.80" fill="#07a220"/>
<rect x="587" y="545.80" width="7" height="2.40" fill="#fcd000"/>
<rect x="587" y="545.80" width="7" height="1" fill="#f6c200"/>
<rect x="587" y="547.20" width="7" height="1" fill="#f6c200"/>
<rect x="587" y="545.80" width="1" height="2.40" fill="#f6c200"/>
<rect x="593" y="545.80" width="1" height="2.40" fill="#f6c200"/>
<rect x="587" y="541.40" width="7" height="4.40" fill="#fa4208"/>
<rect x="587" y="541.40" width="7" height="1" fill="#ff1800"/>
<rect x="587" y="544.80" width="7" height="1" fill="#ff1800"/>
<rect x="587" y="541.40" width="1" height="4.40" fill="#ff1800"/>
<rect x="593" y="541.40" width="1" height="4.40" fill="#ff1800"/>
<rect x="587" y="540.20" width="7" height="1.20" fill="#a9aaaf"/>
<rect x="587" y="540.20" width="7" height="1" fill="#9c9ca2"/>
<rect x="587" y="540.20" width="1" height="1.20" fill="#9c9ca2"/>
<rect x="593" y="540.20" width="1" height="1.20" fill="#9c9ca2"/>
<rect x="602" y="525.8" width="1" height="163.2" fill="#c2e2c3"/>
<rect x="595" y="524.80" width="7" height="164.20" fill="#33ae3e"/>
<rect x="595" y="524.80" width="7" height="1" fill="#07a220"/>
<rect x="595" y="688.00" width="7" height="1" fill="#07a220"/>
<rect x="595" y="524.80" width="1" height="164.20" fill="#07a220"/>
<rect x="601" y="524.80" width="1" height="164.20" fill="#07a220"/>
<rect x="603" y="510.40" width="7" height="178.60" fill="#33ae3e"/>
<rect x="603" y="510.40" width="7" height="1" fill="#07a220"/>
<rect x="603" y="688.00" width="7" height="1" fill="#07a220"/>
<rect x="603" y="510.40" width="1" height="178.60" fill="#07a220"/>
<rect x="617" y="524.4" width="1" height="164.6" fill="#c2e2c3"/>
<rect x="610" y="527.20" width="7" height="161.80" fill="#33ae3e"/>
<rect x="610" y="527.20" width="7" height="1" fill="#07a220"/>
<rect x="610" y="688.00" width="7" height="1" fill="#07a220"/>
<rect x="616" y="527.20" width="1" height="161.80" fill="#07a220"/>
<rect x="610" y="525.30" width="7" height="1.90" fill="#fcd000"/>
<rect x="610" y="525.30" width="7" height="1" fill="#f6c200"/>
<rect x="610" y="526.20" width="7" height="1" fill="#f6c200"/>
<rect x="616" y="525.30" width="1" height="1.90" fill="#f6c200"/>
<rect x="610" y="523.40" width="7" height="1.90" fill="#e0000c"/>
<rect x="610" y="523.40" width="7" height="1" fill="#d10000"/>
<rect x="610" y="524.30" width="7" height="1" fill="#d10000"/>
<rect x="616" y="523.40" width="1" height="1.90" fill="#d10000"/>
<rect x="625" y="522.7" width="1" height="166.3" fill="#c2e2c3"/>
<rect x="618" y="523.40" width="7" height="165.60" fill="#33ae3e"/>
<rect x="618" y="523.40" width="7" height="1" fill="#07a220"/>
<rect x="618" y="688.00" width="7" height="1" fill="#07a220"/>
<rect x="618" y="523.40" width="1" height="165.60" fill="#07a220"/>
<rect x="624" y="523.40" width="1" height="165.60" fill="#07a220"/>
<rect x="618" y="521.70" width="7" height="1.70" fill="#e0000c"/>
<rect x="618" y="521.70" width="7" height="1" fill="#d10000"/>
<rect x="618" y="522.40" width="7" height="1" fill="#d10000"/>
<rect x="618" y="521.70" width="1" height="1.70" fill="#d10000"/>
<rect x="624" y="521.70" width="1" height="1.70" fill="#d10000"/>
<rect x="633" y="522.7" width="1" height="166.3" fill="#c2e2c3"/>
<rect x="626" y="522.00" width="7" height="167.00" fill="#33ae3e"/>
<rect x="626" y="522.00" width="7" height="1" fill="#07a220"/>
<rect x="626" y="688.00" width="7" height="1" fill="#07a220"/>
<rect x="626" y="522.00" width="1" height="167.00" fill="#07a220"/>
<rect x="632" y="522.00" width="1" height="167.00" fill="#07a220"/>
<rect x="626" y="520.50" width="7" height="1.50" fill="#e0000c"/>
<rect x="626" y="520.50" width="7" height="1" fill="#d10000"/>
<rect x="626" y="520.50" width="1" height="1.50" fill="#d10000"/>
<rect x="632" y="520.50" width="1" height="1.50" fill="#d10000"/>
<rect x="641" y="522.7" width="1" height="166.3" fill="#c2e2c3"/>
<rect x="634" y="527.20" width="7" height="161.80" fill="#33ae3e"/>
<rect x="634" y="527.20" width="7" height="1" fill="#07a220"/>
<rect x="634" y="688.00" width="7" height="1" fill="#07a220"/>
<rect x="634" y="527.20" width="1" height="161.80" fill="#07a220"/>
<rect x="640" y="527.20" width="1" height="161.80" fill="#07a220"/>
<rect x="634" y="523.40" width="7" height="3.80" fill="#fcd000"/>
<rect x="634" y="523.40" width="7" height="1" fill="#f6c200"/>
<rect x="634" y="526.20" width="7" height="1" fill="#f6c200"/>
<rect x="634" y="523.40" width="1" height="3.80" fill="#f6c200"/>
<rect x="640" y="523.40" width="1" height="3.80" fill="#f6c200"/>
<rect x="634" y="521.70" width="7" height="1.70" fill="#e0000c"/>
<rect x="634" y="521.70" width="7" height="1" fill="#d10000"/>
<rect x="634" y="522.40" width="7" height="1" fill="#d10000"/>
<rect x="634" y="521.70" width="1" height="1.70" fill="#d10000"/>
<rect x="640" y="521.70" width="1" height="1.70" fill="#d10000"/>
<rect x="649" y="546.8" width="1" height="142.2" fill="#c2e2c3"/>
<rect x="642" y="520.50" width="7" height="168.50" fill="#33ae3e"/>
<rect x="642" y="520.50" width="7" height="1" fill="#07a220"/>
<rect x="642" y="688.00" width="7" height="1" fill="#07a220"/>
<rect x="642" y="520.50" width="1" height="168.50" fill="#07a220"/>
<rect x="648" y="520.50" width="1" height="168.50" fill="#07a220"/>
<rect x="642" y="518.00" width="7" height="2.50" fill="#e0000c"/>
<rect x="642" y="518.00" width="7" height="1" fill="#d10000"/>
<rect x="642" y="519.50" width="7" height="1" fill="#d10000"/>
<rect x="642" y="518.00" width="1" height="2.50" fill="#d10000"/>
<rect x="648" y="518.00" width="1" height="2.50" fill="#d10000"/>
<rect x="650" y="551.10" width="7" height="137.90" fill="#33ae3e"/>
<rect x="650" y="551.10" width="7" height="1" fill="#07a220"/>
<rect x="650" y="688.00" width="7" height="1" fill="#07a220"/>
<rect x="650" y="551.10" width="1" height="137.90" fill="#07a220"/>
<rect x="650" y="549.40" width="7" height="1.70" fill="#fcd000"/>
<rect x="650" y="549.40" width="7" height="1" fill="#f6c200"/>
<rect x="650" y="550.10" width="7" height="1" fill="#f6c200"/>
<rect x="650" y="549.40" width="1" height="1.70" fill="#f6c200"/>
<rect x="650" y="547.70" width="7" height="1.70" fill="#fa4208"/>
<rect x="650" y="547.70" width="7" height="1" fill="#ff1800"/>
<rect x="650" y="548.40" width="7" height="1" fill="#ff1800"/>
<rect x="650" y="547.70" width="1" height="1.70" fill="#ff1800"/>
<rect x="650" y="545.80" width="7" height="1.90" fill="#a9aaaf"/>
<rect x="650" y="545.80" width="7" height="1" fill="#9c9ca2"/>
<rect x="650" y="546.70" width="7" height="1" fill="#9c9ca2"/>
<rect x="650" y="545.80" width="1" height="1.90" fill="#9c9ca2"/>
<rect x="664" y="519.0" width="1" height="170.0" fill="#c2e2c3"/>
<rect x="657" y="516.90" width="7" height="172.10" fill="#33ae3e"/>
<rect x="657" y="516.90" width="7" height="1" fill="#07a220"/>
<rect x="657" y="688.00" width="7" height="1" fill="#07a220"/>
<rect x="663" y="516.90" width="1" height="172.10" fill="#07a220"/>
<rect x="672" y="553.3" width="1" height="135.7" fill="#c2e2c3"/>
<rect x="665" y="522.20" width="7" height="166.80" fill="#33ae3e"/>
<rect x="665" y="522.20" width="7" height="1" fill="#07a220"/>
<rect x="665" y="688.00" width="7" height="1" fill="#07a220"/>
<rect x="665" y="522.20" width="1" height="166.80" fill="#07a220"/>
<rect x="671" y="522.20" width="1" height="166.80" fill="#07a220"/>
<rect x="665" y="518.00" width="7" height="4.20" fill="#fcd000"/>
<rect x="665" y="518.00" width="7" height="1" fill="#f6c200"/>
<rect x="665" y="521.20" width="7" height="1" fill="#f6c200"/>
<rect x="665" y="518.00" width="1" height="4.20" fill="#f6c200"/>
<rect x="671" y="518.00" width="1" height="4.20" fill="#f6c200"/>
<rect x="680" y="553.3" width="1" height="135.7" fill="#c2e2c3"/>
<rect x="673" y="557.80" width="7" height="131.20" fill="#33ae3e"/>
<rect x="673" y="557.80" width="7" height="1" fill="#07a220"/>
<rect x="673" y="688.00" width="7" height="1" fill="#07a220"/>
<rect x="673" y="557.80" width="1" height="131.20" fill="#07a220"/>
<rect x="679" y="557.80" width="1" height="131.20" fill="#07a220"/>
<rect x="673" y="555.90" width="7" height="1.90" fill="#fcd000"/>
<rect x="673" y="555.90" width="7" height="1" fill="#f6c200"/>
<rect x="673" y="556.80" width="7" height="1" fill="#f6c200"/>
<rect x="673" y="555.90" width="1" height="1.90" fill="#f6c200"/>
<rect x="679" y="555.90" width="1" height="1.90" fill="#f6c200"/>
<rect x="673" y="552.30" width="7" height="3.60" fill="#a9aaaf"/>
<rect x="673" y="552.30" width="7" height="1" fill="#9c9ca2"/>
<rect x="673" y="554.90" width="7" height="1" fill="#9c9ca2"/>
<rect x="673" y="552.30" width="1" height="3.60" fill="#9c9ca2"/>
<rect x="679" y="552.30" width="1" height="3.60" fill="#9c9ca2"/>
<rect x="688" y="545.6" width="1" height="143.4" fill="#c2e2c3"/>
<rect x="681" y="530.10" width="7" height="158.90" fill="#33ae3e"/>
<rect x="681" y="530.10" width="7" height="1" fill="#07a220"/>
<rect x="681" y="688.00" width="7" height="1" fill="#07a220"/>
<rect x="681" y="530.10" width="1" height="158.90" fill="#07a220"/>
<rect x="687" y="530.10" width="1" height="158.90" fill="#07a220"/>
<rect x="681" y="528.20" width="7" height="1.90" fill="#fcd000"/>
<rect x="681" y="528.20" width="7" height="1" fill="#f6c200"/>
<rect x="681" y="529.10" width="7" height="1" fill="#f6c200"/>
<rect x="681" y="528.20" width="1" height="1.90" fill="#f6c200"/>
<rect x="687" y="528.20" width="1" height="1.90" fill="#f6c200"/>
<rect x="681" y="523.40" width="7" height="4.80" fill="#e0000c"/>
<rect x="681" y="523.40" width="7" height="1" fill="#d10000"/>
<rect x="681" y="527.20" width="7" height="1" fill="#d10000"/>
<rect x="681" y="523.40" width="1" height="4.80" fill="#d10000"/>
<rect x="687" y="523.40" width="1" height="4.80" fill="#d10000"/>
<rect x="689" y="551.30" width="7" height="137.70" fill="#33ae3e"/>
<rect x="689" y="551.30" width="7" height="1" fill="#07a220"/>
<rect x="689" y="688.00" width="7" height="1" fill="#07a220"/>
<rect x="689" y="551.30" width="1" height="137.70" fill="#07a220"/>
<rect x="689" y="549.40" width="7" height="1.90" fill="#fcd000"/>
<rect x="689" y="549.40" width="7" height="1" fill="#f6c200"/>
<rect x="689" y="550.30" width="7" height="1" fill="#f6c200"/>
<rect x="689" y="549.40" width="1" height="1.90" fill="#f6c200"/>
<rect x="689" y="544.60" width="7" height="4.80" fill="#a9aaaf"/>
<rect x="689" y="544.60" width="7" height="1" fill="#9c9ca2"/>
<rect x="689" y="548.40" width="7" height="1" fill="#9c9ca2"/>
<rect x="689" y="544.60" width="1" height="4.80" fill="#9c9ca2"/>
<rect x="704" y="535.9" width="1" height="153.1" fill="#c2e2c3"/>
<rect x="696" y="537.80" width="8" height="151.20" fill="#33ae3e"/>
<rect x="696" y="537.80" width="8" height="1" fill="#07a220"/>
<rect x="696" y="688.00" width="8" height="1" fill="#07a220"/>
<rect x="703" y="537.80" width="1" height="151.20" fill="#07a220"/>
<rect x="696" y="534.90" width="8" height="2.90" fill="#a9aaaf"/>
<rect x="696" y="534.90" width="8" height="1" fill="#9c9ca2"/>
<rect x="696" y="536.80" width="8" height="1" fill="#9c9ca2"/>
<rect x="703" y="534.90" width="1" height="2.90" fill="#9c9ca2"/>
<rect x="712" y="543.9" width="1" height="145.1" fill="#c2e2c3"/>
<rect x="705" y="524.80" width="7" height="164.20" fill="#33ae3e"/>
<rect x="705" y="524.80" width="7" height="1" fill="#07a220"/>
<rect x="705" y="688.00" width="7" height="1" fill="#07a220"/>
<rect x="705" y="524.80" width="1" height="164.20" fill="#07a220"/>
<rect x="711" y="524.80" width="1" height="164.20" fill="#07a220"/>
<rect x="720" y="543.9" width="1" height="145.1" fill="#c2e2c3"/>
<rect x="713" y="548.20" width="7" height="140.80" fill="#33ae3e"/>
<rect x="713" y="548.20" width="7" height="1" fill="#07a220"/>
<rect x="713" y="688.00" width="7" height="1" fill="#07a220"/>
<rect x="713" y="548.20" width="1" height="140.80" fill="#07a220"/>
<rect x="719" y="548.20" width="1" height="140.80" fill="#07a220"/>
<rect x="713" y="546.30" width="7" height="1.90" fill="#fcd000"/>
<rect x="713" y="546.30" width="7" height="1" fill="#f6c200"/>
<rect x="713" y="547.20" width="7" height="1" fill="#f6c200"/>
<rect x="713" y="546.30" width="1" height="1.90" fill="#f6c200"/>
<rect x="719" y="546.30" width="1" height="1.90" fill="#f6c200"/>
<rect x="713" y="542.90" width="7" height="3.40" fill="#a9aaaf"/>
<rect x="713" y="542.90" width="7" height="1" fill="#9c9ca2"/>
<rect x="713" y="545.30" width="7" height="1" fill="#9c9ca2"/>
<rect x="713" y="542.90" width="1" height="3.40" fill="#9c9ca2"/>
<rect x="719" y="542.90" width="1" height="3.40" fill="#9c9ca2"/>
<rect x="728" y="540.8" width="1" height="148.2" fill="#c2e2c3"/>
<rect x="721" y="543.20" width="7" height="145.80" fill="#33ae3e"/>
<rect x="721" y="543.20" width="7" height="1" fill="#07a220"/>
<rect x="721" y="688.00" width="7" height="1" fill="#07a220"/>
<rect x="721" y="543.20" width="1" height="145.80" fill="#07a220"/>
<rect x="727" y="543.20" width="1" height="145.80" fill="#07a220"/>
<rect x="721" y="541.40" width="7" height="1.80" fill="#fcd000"/>
<rect x="721" y="541.40" width="7" height="1" fill="#f6c200"/>
<rect x="721" y="542.20" width="7" height="1" fill="#f6c200"/>
<rect x="721" y="541.40" width="1" height="1.80" fill="#f6c200"/>
<rect x="727" y="541.40" width="1" height="1.80" fill="#f6c200"/>
<rect x="721" y="539.80" width="7" height="1.60" fill="#a9aaaf"/>
<rect x="721" y="539.80" width="7" height="1" fill="#9c9ca2"/>
<rect x="721" y="540.40" width="7" height="1" fill="#9c9ca2"/>
<rect x="721" y="539.80" width="1" height="1.60" fill="#9c9ca2"/>
<rect x="727" y="539.80" width="1" height="1.60" fill="#9c9ca2"/>
<rect x="735" y="537.1" width="1" height="151.9" fill="#c2e2c3"/>
<rect x="729" y="535.40" width="6" height="153.60" fill="#33ae3e"/>
<rect x="729" y="535.40" width="6" height="1" fill="#07a220"/>
<rect x="729" y="688.00" width="6" height="1" fill="#07a220"/>
<rect x="729" y="535.40" width="1" height="153.60" fill="#07a220"/>
<rect x="734" y="535.40" width="1" height="153.60" fill="#07a220"/>
<rect x="729" y="533.70" width="6" height="1.70" fill="#e0000c"/>
<rect x="729" y="533.70" width="6" height="1" fill="#d10000"/>
<rect x="729" y="534.40" width="6" height="1" fill="#d10000"/>
<rect x="729" y="533.70" width="1" height="1.70" fill="#d10000"/>
<rect x="734" y="533.70" width="1" height="1.70" fill="#d10000"/>
<rect x="736" y="542.20" width="7" height="146.80" fill="#33ae3e"/>
<rect x="736" y="542.20" width="7" height="1" fill="#07a220"/>
<rect x="736" y="688.00" width="7" height="1" fill="#07a220"/>
<rect x="736" y="542.20" width="1" height="146.80" fill="#07a220"/>
<rect x="736" y="540.20" width="7" height="2.00" fill="#fcd000"/>
<rect x="736" y="540.20" width="7" height="1" fill="#f6c200"/>
<rect x="736" y="541.20" width="7" height="1" fill="#f6c200"/>
<rect x="736" y="540.20" width="1" height="2.00" fill="#f6c200"/>
<rect x="736" y="537.30" width="7" height="2.90" fill="#e0000c"/>
<rect x="736" y="537.30" width="7" height="1" fill="#d10000"/>
<rect x="736" y="539.20" width="7" height="1" fill="#d10000"/>
<rect x="736" y="537.30" width="1" height="2.90" fill="#d10000"/>
<rect x="736" y="536.10" width="7" height="1.20" fill="#a9aaaf"/>
<rect x="736" y="536.10" width="7" height="1" fill="#9c9ca2"/>
<rect x="736" y="536.10" width="1" height="1.20" fill="#9c9ca2"/>
<rect x="751" y="542.7" width="1" height="146.3" fill="#c2e2c3"/>
<rect x="743" y="527.20" width="8" height="161.80" fill="#33ae3e"/>
<rect x="743" y="527.20" width="8" height="1" fill="#07a220"/>
<rect x="743" y="688.00" width="8" height="1" fill="#07a220"/>
<rect x="750" y="527.20" width="1" height="161.80" fill="#07a220"/>
<rect x="743" y="523.40" width="8" height="3.80" fill="#fcd000"/>
<rect x="743" y="523.40" width="8" height="1" fill="#f6c200"/>
<rect x="743" y="526.20" width="8" height="1" fill="#f6c200"/>
<rect x="750" y="523.40" width="1" height="3.80" fill="#f6c200"/>
<rect x="759" y="542.7" width="1" height="146.3" fill="#c2e2c3"/>
<rect x="752" y="545.80" width="7" height="143.20" fill="#33ae3e"/>
<rect x="752" y="545.80" width="7" height="1" fill="#07a220"/>
<rect x="752" y="688.00" width="7" height="1" fill="#07a220"/>
<rect x="752" y="545.80" width="1" height="143.20" fill="#07a220"/>
<rect x="758" y="545.80" width="1" height="143.20" fill="#07a220"/>
<rect x="752" y="544.10" width="7" height="1.70" fill="#e0000c"/>
<rect x="752" y="544.10" width="7" height="1" fill="#d10000"/>
<rect x="752" y="544.80" width="7" height="1" fill="#d10000"/>
<rect x="752" y="544.10" width="1" height="1.70" fill="#d10000"/>
<rect x="758" y="544.10" width="1" height="1.70" fill="#d10000"/>
<rect x="752" y="541.70" width="7" height="2.40" fill="#a9aaaf"/>
<rect x="752" y="541.70" width="7" height="1" fill="#9c9ca2"/>
<rect x="752" y="543.10" width="7" height="1" fill="#9c9ca2"/>
<rect x="752" y="541.70" width="1" height="2.40" fill="#9c9ca2"/>
<rect x="758" y="541.70" width="1" height="2.40" fill="#9c9ca2"/>
<rect x="767" y="535.9" width="1" height="153.1" fill="#c2e2c3"/>
<rect x="760" y="536.60" width="7" height="152.40" fill="#33ae3e"/>
<rect x="760" y="536.60" width="7" height="1" fill="#07a220"/>
<rect x="760" y="688.00" width="7" height="1" fill="#07a220"/>
<rect x="760" y="536.60" width="1" height="152.40" fill="#07a220"/>
<rect x="766" y="536.60" width="1" height="152.40" fill="#07a220"/>
<rect x="760" y="534.50" width="7" height="2.10" fill="#e0000c"/>
<rect x="760" y="534.50" width="7" height="1" fill="#d10000"/>
<rect x="760" y="535.60" width="7" height="1" fill="#d10000"/>
<rect x="760" y="534.50" width="1" height="2.10" fill="#d10000"/>
<rect x="766" y="534.50" width="1" height="2.10" fill="#d10000"/>
<rect x="760" y="533.30" width="7" height="1.20" fill="#a9aaaf"/>
<rect x="760" y="533.30" width="7" height="1" fill="#9c9ca2"/>
<rect x="760" y="533.30" width="1" height="1.20" fill="#9c9ca2"/>
<rect x="766" y="533.30" width="1" height="1.20" fill="#9c9ca2"/>
<rect x="775" y="535.9" width="1" height="153.1" fill="#c2e2c3"/>
<rect x="768" y="544.60" width="7" height="144.40" fill="#33ae3e"/>
<rect x="768" y="544.60" width="7" height="1" fill="#07a220"/>
<rect x="768" y="688.00" width="7" height="1" fill="#07a220"/>
<rect x="768" y="544.60" width="1" height="144.40" fill="#07a220"/>
<rect x="774" y="544.60" width="1" height="144.40" fill="#07a220"/>
<rect x="768" y="542.90" width="7" height="1.70" fill="#fcd000"/>
<rect x="768" y="542.90" width="7" height="1" fill="#f6c200"/>
<rect x="768" y="543.60" width="7" height="1" fill="#f6c200"/>
<rect x="768" y="542.90" width="1" height="1.70" fill="#f6c200"/>
<rect x="774" y="542.90" width="1" height="1.70" fill="#f6c200"/>
<rect x="768" y="536.10" width="7" height="6.80" fill="#fa4208"/>
<rect x="768" y="536.10" width="7" height="1" fill="#ff1800"/>
<rect x="768" y="541.90" width="7" height="1" fill="#ff1800"/>
<rect x="768" y="536.10" width="1" height="6.80" fill="#ff1800"/>
<rect x="774" y="536.10" width="1" height="6.80" fill="#ff1800"/>
<rect x="768" y="534.90" width="7" height="1.20" fill="#a9aaaf"/>
<rect x="768" y="534.90" width="7" height="1" fill="#9c9ca2"/>
<rect x="768" y="534.90" width="1" height="1.20" fill="#9c9ca2"/>
<rect x="774" y="534.90" width="1" height="1.20" fill="#9c9ca2"/>
<rect x="776" y="533.70" width="7" height="155.30" fill="#33ae3e"/>
<rect x="776" y="533.70" width="7" height="1" fill="#07a220"/>
<rect x="776" y="688.00" width="7" height="1" fill="#07a220"/>
<rect x="776" y="533.70" width="1" height="155.30" fill="#07a220"/>
<rect x="776" y="526.50" width="7" height="7.20" fill="#fcd000"/>
<rect x="776" y="526.50" width="7" height="1" fill="#f6c200"/>
<rect x="776" y="532.70" width="7" height="1" fill="#f6c200"/>
<rect x="776" y="526.50" width="1" height="7.20" fill="#f6c200"/>
<rect x="776" y="524.60" width="7" height="1.90" fill="#e0000c"/>
<rect x="776" y="524.60" width="7" height="1" fill="#d10000"/>
<rect x="776" y="525.50" width="7" height="1" fill="#d10000"/>
<rect x="776" y="524.60" width="1" height="1.90" fill="#d10000"/>
<rect x="790" y="539.1" width="1" height="149.9" fill="#c2e2c3"/>
<rect x="783" y="522.20" width="7" height="166.80" fill="#33ae3e"/>
<rect x="783" y="522.20" width="7" height="1" fill="#07a220"/>
<rect x="783" y="688.00" width="7" height="1" fill="#07a220"/>
<rect x="789" y="522.20" width="1" height="166.80" fill="#07a220"/>
<rect x="798" y="539.1" width="1" height="149.9" fill="#c2e2c3"/>
<rect x="791" y="544.60" width="7" height="144.40" fill="#33ae3e"/>
<rect x="791" y="544.60" width="7" height="1" fill="#07a220"/>
<rect x="791" y="688.00" width="7" height="1" fill="#07a220"/>
<rect x="791" y="544.60" width="1" height="144.40" fill="#07a220"/>
<rect x="797" y="544.60" width="1" height="144.40" fill="#07a220"/>
<rect x="791" y="543.40" width="7" height="1.20" fill="#fcd000"/>
<rect x="791" y="543.40" width="7" height="1" fill="#f6c200"/>
<rect x="791" y="543.40" width="1" height="1.20" fill="#f6c200"/>
<rect x="797" y="543.40" width="1" height="1.20" fill="#f6c200"/>
<rect x="791" y="541.70" width="7" height="1.70" fill="#e0000c"/>
<rect x="791" y="541.70" width="7" height="1" fill="#d10000"/>
<rect x="791" y="542.40" width="7" height="1" fill="#d10000"/>
<rect x="791" y="541.70" width="1" height="1.70" fill="#d10000"/>
<rect x="797" y="541.70" width="1" height="1.70" fill="#d10000"/>
<rect x="791" y="538.10" width="7" height="3.60" fill="#a9aaaf"/>
<rect x="791" y="538.10" width="7" height="1" fill="#9c9ca2"/>
<rect x="791" y="540.70" width="7" height="1" fill="#9c9ca2"/>
<rect x="791" y="538.10" width="1" height="3.60" fill="#9c9ca2"/>
<rect x="797" y="538.10" width="1" height="3.60" fill="#9c9ca2"/>
<rect x="806" y="548.7" width="1" height="140.3" fill="#c2e2c3"/>
<rect x="799" y="541.70" width="7" height="147.30" fill="#33ae3e"/>
<rect x="799" y="541.70" width="7" height="1" fill="#07a220"/>
<rect x="799" y="688.00" width="7" height="1" fill="#07a220"/>
<rect x="799" y="541.70" width="1" height="147.30" fill="#07a220"/>
<rect x="805" y="541.70" width="1" height="147.30" fill="#07a220"/>
<rect x="799" y="539.80" width="7" height="1.90" fill="#fcd000"/>
<rect x="799" y="539.80" width="7" height="1" fill="#f6c200"/>
<rect x="799" y="540.70" width="7" height="1" fill="#f6c200"/>
<rect x="799" y="539.80" width="1" height="1.90" fill="#f6c200"/>
<rect x="805" y="539.80" width="1" height="1.90" fill="#f6c200"/>
<rect x="799" y="537.80" width="7" height="2.00" fill="#a9aaaf"/>
<rect x="799" y="537.80" width="7" height="1" fill="#9c9ca2"/>
<rect x="799" y="538.80" width="7" height="1" fill="#9c9ca2"/>
<rect x="799" y="537.80" width="1" height="2.00" fill="#9c9ca2"/>
<rect x="805" y="537.80" width="1" height="2.00" fill="#9c9ca2"/>
<rect x="814" y="548.7" width="1" height="140.3" fill="#c2e2c3"/>
<rect x="807" y="551.10" width="7" height="137.90" fill="#33ae3e"/>
<rect x="807" y="551.10" width="7" height="1" fill="#07a220"/>
<rect x="807" y="688.00" width="7" height="1" fill="#07a220"/>
<rect x="807" y="551.10" width="1" height="137.90" fill="#07a220"/>
<rect x="813" y="551.10" width="1" height="137.90" fill="#07a220"/>
<rect x="807" y="547.70" width="7" height="3.40" fill="#a9aaaf"/>
<rect x="807" y="547.70" width="7" height="1" fill="#9c9ca2"/>
<rect x="807" y="550.10" width="7" height="1" fill="#9c9ca2"/>
<rect x="807" y="547.70" width="1" height="3.40" fill="#9c9ca2"/>
<rect x="813" y="547.70" width="1" height="3.40" fill="#9c9ca2"/>
<rect x="822" y="563.7" width="1" height="125.3" fill="#c2e2c3"/>
<rect x="815" y="535.40" width="7" height="153.60" fill="#33ae3e"/>
<rect x="815" y="535.40" width="7" height="1" fill="#07a220"/>
<rect x="815" y="688.00" width="7" height="1" fill="#07a220"/>
<rect x="815" y="535.40" width="1" height="153.60" fill="#07a220"/>
<rect x="821" y="535.40" width="1" height="153.60" fill="#07a220"/>
<rect x="815" y="533.70" width="7" height="1.70" fill="#fcd000"/>
<rect x="815" y="533.70" width="7" height="1" fill="#f6c200"/>
<rect x="815" y="534.40" width="7" height="1" fill="#f6c200"/>
<rect x="815" y="533.70" width="1" height="1.70" fill="#f6c200"/>
<rect x="821" y="533.70" width="1" height="1.70" fill="#f6c200"/>
<rect x="815" y="531.30" width="7" height="2.40" fill="#e0000c"/>
<rect x="815" y="531.30" width="7" height="1" fill="#d10000"/>
<rect x="815" y="532.70" width="7" height="1" fill="#d10000"/>
<rect x="815" y="531.30" width="1" height="2.40" fill="#d10000"/>
<rect x="821" y="531.30" width="1" height="2.40" fill="#d10000"/>
<rect x="815" y="530.10" width="7" height="1.20" fill="#a9aaaf"/>
<rect x="815" y="530.10" width="7" height="1" fill="#9c9ca2"/>
<rect x="815" y="530.10" width="1" height="1.20" fill="#9c9ca2"/>
<rect x="821" y="530.10" width="1" height="1.20" fill="#9c9ca2"/>
<rect x="823" y="571.10" width="7" height="117.90" fill="#33ae3e"/>
<rect x="823" y="571.10" width="7" height="1" fill="#07a220"/>
<rect x="823" y="688.00" width="7" height="1" fill="#07a220"/>
<rect x="823" y="571.10" width="1" height="117.90" fill="#07a220"/>
<rect x="823" y="565.50" width="7" height="5.60" fill="#fcd000"/>
<rect x="823" y="565.50" width="7" height="1" fill="#f6c200"/>
<rect x="823" y="570.10" width="7" height="1" fill="#f6c200"/>
<rect x="823" y="565.50" width="1" height="5.60" fill="#f6c200"/>
<rect x="823" y="562.70" width="7" height="2.80" fill="#a9aaaf"/>
<rect x="823" y="562.70" width="7" height="1" fill="#9c9ca2"/>
<rect x="823" y="564.50" width="7" height="1" fill="#9c9ca2"/>
<rect x="823" y="562.70" width="1" height="2.80" fill="#9c9ca2"/>
<rect x="837" y="549.2" width="1" height="139.8" fill="#c2e2c3"/>
<rect x="830" y="551.10" width="7" height="137.90" fill="#33ae3e"/>
<rect x="830" y="551.10" width="7" height="1" fill="#07a220"/>
<rect x="830" y="688.00" width="7" height="1" fill="#07a220"/>
<rect x="836" y="551.10" width="1" height="137.90" fill="#07a220"/>
<rect x="830" y="549.40" width="7" height="1.70" fill="#e0000c"/>
<rect x="830" y="549.40" width="7" height="1" fill="#d10000"/>
<rect x="830" y="550.10" width="7" height="1" fill="#d10000"/>
<rect x="836" y="549.40" width="1" height="1.70" fill="#d10000"/>
<rect x="830" y="548.20" width="7" height="1.20" fill="#a9aaaf"/>
<rect x="830" y="548.20" width="7" height="1" fill="#9c9ca2"/>
<rect x="836" y="548.20" width="1" height="1.20" fill="#9c9ca2"/>
<rect x="845" y="546.8" width="1" height="142.2" fill="#c2e2c3"/>
<rect x="838" y="548.20" width="7" height="140.80" fill="#33ae3e"/>
<rect x="838" y="548.20" width="7" height="1" fill="#07a220"/>
<rect x="838" y="688.00" width="7" height="1" fill="#07a220"/>
<rect x="838" y="548.20" width="1" height="140.80" fill="#07a220"/>
<rect x="844" y="548.20" width="1" height="140.80" fill="#07a220"/>
<rect x="838" y="543.40" width="7" height="4.80" fill="#a9aaaf"/>
<rect x="838" y="543.40" width="7" height="1" fill="#9c9ca2"/>
<rect x="838" y="547.20" width="7" height="1" fill="#9c9ca2"/>
<rect x="838" y="543.40" width="1" height="4.80" fill="#9c9ca2"/>
<rect x="844" y="543.40" width="1" height="4.80" fill="#9c9ca2"/>
<rect x="853" y="556.9" width="1" height="132.1" fill="#c2e2c3"/>
<rect x="846" y="551.10" width="7" height="137.90" fill="#33ae3e"/>
<rect x="846" y="551.10" width="7" height="1" fill="#07a220"/>
<rect x="846" y="688.00" width="7" height="1" fill="#07a220"/>
<rect x="846" y="551.10" width="1" height="137.90" fill="#07a220"/>
<rect x="852" y="551.10" width="1" height="137.90" fill="#07a220"/>
<rect x="846" y="549.40" width="7" height="1.70" fill="#e0000c"/>
<rect x="846" y="549.40" width="7" height="1" fill="#d10000"/>
<rect x="846" y="550.10" width="7" height="1" fill="#d10000"/>
<rect x="846" y="549.40" width="1" height="1.70" fill="#d10000"/>
<rect x="852" y="549.40" width="1" height="1.70" fill="#d10000"/>
<rect x="846" y="545.80" width="7" height="3.60" fill="#a9aaaf"/>
<rect x="846" y="545.80" width="7" height="1" fill="#9c9ca2"/>
<rect x="846" y="548.40" width="7" height="1" fill="#9c9ca2"/>
<rect x="846" y="545.80" width="1" height="3.60" fill="#9c9ca2"/>
<rect x="852" y="545.80" width="1" height="3.60" fill="#9c9ca2"/>
<rect x="861" y="556.9" width="1" height="132.1" fill="#c2e2c3"/>
<rect x="854" y="559.00" width="7" height="130.00" fill="#33ae3e"/>
<rect x="854" y="559.00" width="7" height="1" fill="#07a220"/>
<rect x="854" y="688.00" width="7" height="1" fill="#07a220"/>
<rect x="854" y="559.00" width="1" height="130.00" fill="#07a220"/>
<rect x="860" y="559.00" width="1" height="130.00" fill="#07a220"/>
<rect x="854" y="557.30" width="7" height="1.70" fill="#fcd000"/>
<rect x="854" y="557.30" width="7" height="1" fill="#f6c200"/>
<rect x="854" y="558.00" width="7" height="1" fill="#f6c200"/>
<rect x="854" y="557.30" width="1" height="1.70" fill="#f6c200"/>
<rect x="860" y="557.30" width="1" height="1.70" fill="#f6c200"/>
<rect x="854" y="555.90" width="7" height="1.40" fill="#a9aaaf"/>
<rect x="854" y="555.90" width="7" height="1" fill="#9c9ca2"/>
<rect x="854" y="555.90" width="1" height="1.40" fill="#9c9ca2"/>
<rect x="860" y="555.90" width="1" height="1.40" fill="#9c9ca2"/>
<rect x="862" y="552.50" width="7" height="136.50" fill="#33ae3e"/>
<rect x="862" y="552.50" width="7" height="1" fill="#07a220"/>
<rect x="862" y="688.00" width="7" height="1" fill="#07a220"/>
<rect x="862" y="552.50" width="1" height="136.50" fill="#07a220"/>
<rect x="862" y="551.10" width="7" height="1.40" fill="#fcd000"/>
<rect x="862" y="551.10" width="7" height="1" fill="#f6c200"/>
<rect x="862" y="551.10" width="1" height="1.40" fill="#f6c200"/>
<rect x="862" y="549.40" width="7" height="1.70" fill="#e0000c"/>
<rect x="862" y="549.40" width="7" height="1" fill="#d10000"/>
<rect x="862" y="550.10" width="7" height="1" fill="#d10000"/>
<rect x="862" y="549.40" width="1" height="1.70" fill="#d10000"/>
<rect x="862" y="545.80" width="7" height="3.60" fill="#a9aaaf"/>
<rect x="862" y="545.80" width="7" height="1" fill="#9c9ca2"/>
<rect x="862" y="548.40" width="7" height="1" fill="#9c9ca2"/>
<rect x="862" y="545.80" width="1" height="3.60" fill="#9c9ca2"/>
<rect x="876" y="542.4" width="1" height="146.6" fill="#c2e2c3"/>
<rect x="869" y="536.60" width="7" height="152.40" fill="#33ae3e"/>
<rect x="869" y="536.60" width="7" height="1" fill="#07a220"/>
<rect x="869" y="688.00" width="7" height="1" fill="#07a220"/>
<rect x="875" y="536.60" width="1" height="152.40" fill="#07a220"/>
<rect x="869" y="534.90" width="7" height="1.70" fill="#e0000c"/>
<rect x="869" y="534.90" width="7" height="1" fill="#d10000"/>
<rect x="869" y="535.60" width="7" height="1" fill="#d10000"/>
<rect x="875" y="534.90" width="1" height="1.70" fill="#d10000"/>
<rect x="884" y="550.4" width="1" height="138.6" fill="#c2e2c3"/>
<rect x="877" y="544.60" width="7" height="144.40" fill="#33ae3e"/>
<rect x="877" y="544.60" width="7" height="1" fill="#07a220"/>
<rect x="877" y="688.00" width="7" height="1" fill="#07a220"/>
<rect x="877" y="544.60" width="1" height="144.40" fill="#07a220"/>
<rect x="883" y="544.60" width="1" height="144.40" fill="#07a220"/>
<rect x="877" y="541.40" width="7" height="3.20" fill="#fcd000"/>
<rect x="877" y="541.40" width="7" height="1" fill="#f6c200"/>
<rect x="877" y="543.60" width="7" height="1" fill="#f6c200"/>
<rect x="877" y="541.40" width="1" height="3.20" fill="#f6c200"/>
<rect x="883" y="541.40" width="1" height="3.20" fill="#f6c200"/>
<rect x="892" y="550.4" width="1" height="138.6" fill="#c2e2c3"/>
<rect x="885" y="557.80" width="7" height="131.20" fill="#33ae3e"/>
<rect x="885" y="557.80" width="7" height="1" fill="#07a220"/>
<rect x="885" y="688.00" width="7" height="1" fill="#07a220"/>
<rect x="885" y="557.80" width="1" height="131.20" fill="#07a220"/>
<rect x="891" y="557.80" width="1" height="131.20" fill="#07a220"/>
<rect x="885" y="554.20" width="7" height="3.60" fill="#fcd000"/>
<rect x="885" y="554.20" width="7" height="1" fill="#f6c200"/>
<rect x="885" y="556.80" width="7" height="1" fill="#f6c200"/>
<rect x="885" y="554.20" width="1" height="3.60" fill="#f6c200"/>
<rect x="891" y="554.20" width="1" height="3.60" fill="#f6c200"/>
<rect x="885" y="552.50" width="7" height="1.70" fill="#e0000c"/>
<rect x="885" y="552.50" width="7" height="1" fill="#d10000"/>
<rect x="885" y="553.20" width="7" height="1" fill="#d10000"/>
<rect x="885" y="552.50" width="1" height="1.70" fill="#d10000"/>
<rect x="891" y="552.50" width="1" height="1.70" fill="#d10000"/>
<rect x="885" y="549.40" width="7" height="3.10" fill="#a9aaaf"/>
<rect x="885" y="549.40" width="7" height="1" fill="#9c9ca2"/>
<rect x="885" y="551.50" width="7" height="1" fill="#9c9ca2"/>
<rect x="885" y="549.40" width="1" height="3.10" fill="#9c9ca2"/>
<rect x="891" y="549.40" width="1" height="3.10" fill="#9c9ca2"/>
<rect x="900" y="538.8" width="1" height="150.2" fill="#c2e2c3"/>
<rect x="893" y="543.40" width="7" height="145.60" fill="#33ae3e"/>
<rect x="893" y="543.40" width="7" height="1" fill="#07a220"/>
<rect x="893" y="688.00" width="7" height="1" fill="#07a220"/>
<rect x="893" y="543.40" width="1" height="145.60" fill="#07a220"/>
<rect x="899" y="543.40" width="1" height="145.60" fill="#07a220"/>
<rect x="893" y="539.80" width="7" height="3.60" fill="#fcd000"/>
<rect x="893" y="539.80" width="7" height="1" fill="#f6c200"/>
<rect x="893" y="542.40" width="7" height="1" fill="#f6c200"/>
<rect x="893" y="539.80" width="1" height="3.60" fill="#f6c200"/>
<rect x="899" y="539.80" width="1" height="3.60" fill="#f6c200"/>
<rect x="893" y="537.30" width="7" height="2.50" fill="#e0000c"/>
<rect x="893" y="537.30" width="7" height="1" fill="#d10000"/>
<rect x="893" y="538.80" width="7" height="1" fill="#d10000"/>
<rect x="893" y="537.30" width="1" height="2.50" fill="#d10000"/>
<rect x="899" y="537.30" width="1" height="2.50" fill="#d10000"/>
<rect x="893" y="536.10" width="7" height="1.20" fill="#a9aaaf"/>
<rect x="893" y="536.10" width="7" height="1" fill="#9c9ca2"/>
<rect x="893" y="536.10" width="1" height="1.20" fill="#9c9ca2"/>
<rect x="899" y="536.10" width="1" height="1.20" fill="#9c9ca2"/>
<rect x="908" y="546.8" width="1" height="142.2" fill="#c2e2c3"/>
<rect x="901" y="540.20" width="7" height="148.80" fill="#33ae3e"/>
<rect x="901" y="540.20" width="7" height="1" fill="#07a220"/>
<rect x="901" y="688.00" width="7" height="1" fill="#07a220"/>
<rect x="901" y="540.20" width="1" height="148.80" fill="#07a220"/>
<rect x="907" y="540.20" width="1" height="148.80" fill="#07a220"/>
<rect x="901" y="537.80" width="7" height="2.40" fill="#fcd000"/>
<rect x="901" y="537.80" width="7" height="1" fill="#f6c200"/>
<rect x="901" y="539.20" width="7" height="1" fill="#f6c200"/>
<rect x="901" y="537.80" width="1" height="2.40" fill="#f6c200"/>
<rect x="907" y="537.80" width="1" height="2.40" fill="#f6c200"/>
<rect x="909" y="551.20" width="7" height="137.80" fill="#33ae3e"/>
<rect x="909" y="551.20" width="7" height="1" fill="#07a220"/>
<rect x="909" y="688.00" width="7" height="1" fill="#07a220"/>
<rect x="909" y="551.20" width="1" height="137.80" fill="#07a220"/>
<rect x="909" y="550.00" width="7" height="1.20" fill="#fcd000"/>
<rect x="909" y="550.00" width="7" height="1" fill="#f6c200"/>
<rect x="909" y="550.00" width="1" height="1.20" fill="#f6c200"/>
<rect x="909" y="548.20" width="7" height="1.80" fill="#e0000c"/>
<rect x="909" y="548.20" width="7" height="1" fill="#d10000"/>
<rect x="909" y="549.00" width="7" height="1" fill="#d10000"/>
<rect x="909" y="548.20" width="1" height="1.80" fill="#d10000"/>
<rect x="909" y="545.80" width="7" height="2.40" fill="#a9aaaf"/>
<rect x="909" y="545.80" width="7" height="1" fill="#9c9ca2"/>
<rect x="909" y="547.20" width="7" height="1" fill="#9c9ca2"/>
<rect x="909" y="545.80" width="1" height="2.40" fill="#9c9ca2"/>
<rect x="924" y="559.6" width="1" height="129.4" fill="#c2e2c3"/>
<rect x="916" y="557.80" width="8" height="131.20" fill="#33ae3e"/>
<rect x="916" y="557.80" width="8" height="1" fill="#07a220"/>
<rect x="916" y="688.00" width="8" height="1" fill="#07a220"/>
<rect x="923" y="557.80" width="1" height="131.20" fill="#07a220"/>
<rect x="916" y="555.90" width="8" height="1.90" fill="#fcd000"/>
<rect x="916" y="555.90" width="8" height="1" fill="#f6c200"/>
<rect x="916" y="556.80" width="8" height="1" fill="#f6c200"/>
<rect x="923" y="555.90" width="1" height="1.90" fill="#f6c200"/>
<rect x="932" y="574.5" width="1" height="114.5" fill="#c2e2c3"/>
<rect x="925" y="561.40" width="7" height="127.60" fill="#33ae3e"/>
<rect x="925" y="561.40" width="7" height="1" fill="#07a220"/>
<rect x="925" y="688.00" width="7" height="1" fill="#07a220"/>
<rect x="925" y="561.40" width="1" height="127.60" fill="#07a220"/>
<rect x="931" y="561.40" width="1" height="127.60" fill="#07a220"/>
<rect x="925" y="558.60" width="7" height="2.80" fill="#a9aaaf"/>
<rect x="925" y="558.60" width="7" height="1" fill="#9c9ca2"/>
<rect x="925" y="560.40" width="7" height="1" fill="#9c9ca2"/>
<rect x="925" y="558.60" width="1" height="2.80" fill="#9c9ca2"/>
<rect x="931" y="558.60" width="1" height="2.80" fill="#9c9ca2"/>
<rect x="940" y="578.1" width="1" height="110.9" fill="#c2e2c3"/>
<rect x="933" y="575.90" width="7" height="113.10" fill="#33ae3e"/>
<rect x="933" y="575.90" width="7" height="1" fill="#07a220"/>
<rect x="933" y="688.00" width="7" height="1" fill="#07a220"/>
<rect x="933" y="575.90" width="1" height="113.10" fill="#07a220"/>
<rect x="939" y="575.90" width="1" height="113.10" fill="#07a220"/>
<rect x="933" y="573.50" width="7" height="2.40" fill="#a9aaaf"/>
<rect x="933" y="573.50" width="7" height="1" fill="#9c9ca2"/>
<rect x="933" y="574.90" width="7" height="1" fill="#9c9ca2"/>
<rect x="933" y="573.50" width="1" height="2.40" fill="#9c9ca2"/>
<rect x="939" y="573.50" width="1" height="2.40" fill="#9c9ca2"/>
<rect x="948" y="578.1" width="1" height="110.9" fill="#c2e2c3"/>
<rect x="941" y="580.70" width="7" height="108.30" fill="#33ae3e"/>
<rect x="941" y="580.70" width="7" height="1" fill="#07a220"/>
<rect x="941" y="688.00" width="7" height="1" fill="#07a220"/>
<rect x="941" y="580.70" width="1" height="108.30" fill="#07a220"/>
<rect x="947" y="580.70" width="1" height="108.30" fill="#07a220"/>
<rect x="941" y="577.10" width="7" height="3.60" fill="#fcd000"/>
<rect x="941" y="577.10" width="7" height="1" fill="#f6c200"/>
<rect x="941" y="579.70" width="7" height="1" fill="#f6c200"/>
<rect x="941" y="577.10" width="1" height="3.60" fill="#f6c200"/>
<rect x="947" y="577.10" width="1" height="3.60" fill="#f6c200"/>
<rect x="949" y="574.00" width="7" height="115.00" fill="#33ae3e"/>
<rect x="949" y="574.00" width="7" height="1" fill="#07a220"/>
<rect x="949" y="688.00" width="7" height="1" fill="#07a220"/>
<rect x="949" y="574.00" width="1" height="115.00" fill="#07a220"/>
<rect x="949" y="570.60" width="7" height="3.40" fill="#fcd000"/>
<rect x="949" y="570.60" width="7" height="1" fill="#f6c200"/>
<rect x="949" y="573.00" width="7" height="1" fill="#f6c200"/>
<rect x="949" y="570.60" width="1" height="3.40" fill="#f6c200"/>
<rect x="949" y="568.70" width="7" height="1.90" fill="#a9aaaf"/>
<rect x="949" y="568.70" width="7" height="1" fill="#9c9ca2"/>
<rect x="949" y="569.60" width="7" height="1" fill="#9c9ca2"/>
<rect x="949" y="568.70" width="1" height="1.90" fill="#9c9ca2"/>
<rect x="963" y="570.2" width="1" height="118.8" fill="#c2e2c3"/>
<rect x="956" y="571.10" width="7" height="117.90" fill="#33ae3e"/>
<rect x="956" y="571.10" width="7" height="1" fill="#07a220"/>
<rect x="956" y="688.00" width="7" height="1" fill="#07a220"/>
<rect x="962" y="571.10" width="1" height="117.90" fill="#07a220"/>
<rect x="956" y="569.20" width="7" height="1.90" fill="#fcd000"/>
<rect x="956" y="569.20" width="7" height="1" fill="#f6c200"/>
<rect x="956" y="570.10" width="7" height="1" fill="#f6c200"/>
<rect x="962" y="569.20" width="1" height="1.90" fill="#f6c200"/>
<rect x="971" y="572.1" width="1" height="116.9" fill="#c2e2c3"/>
<rect x="964" y="567.50" width="7" height="121.50" fill="#33ae3e"/>
<rect x="964" y="567.50" width="7" height="1" fill="#07a220"/>
<rect x="964" y="688.00" width="7" height="1" fill="#07a220"/>
<rect x="964" y="567.50" width="1" height="121.50" fill="#07a220"/>
<rect x="970" y="567.50" width="1" height="121.50" fill="#07a220"/>
<rect x="964" y="563.90" width="7" height="3.60" fill="#fcd000"/>
<rect x="964" y="563.90" width="7" height="1" fill="#f6c200"/>
<rect x="964" y="566.50" width="7" height="1" fill="#f6c200"/>
<rect x="964" y="563.90" width="1" height="3.60" fill="#f6c200"/>
<rect x="970" y="563.90" width="1" height="3.60" fill="#f6c200"/>
<rect x="979" y="587.7" width="1" height="101.3" fill="#c2e2c3"/>
<rect x="972" y="571.10" width="7" height="117.90" fill="#33ae3e"/>
<rect x="972" y="571.10" width="7" height="1" fill="#07a220"/>
<rect x="972" y="688.00" width="7" height="1" fill="#07a220"/>
<rect x="972" y="571.10" width="1" height="117.90" fill="#07a220"/>
<rect x="978" y="571.10" width="1" height="117.90" fill="#07a220"/>
<rect x="987" y="587.7" width="1" height="101.3" fill="#c2e2c3"/>
<rect x="980" y="593.50" width="7" height="95.50" fill="#33ae3e"/>
<rect x="980" y="593.50" width="7" height="1" fill="#07a220"/>
<rect x="980" y="688.00" width="7" height="1" fill="#07a220"/>
<rect x="980" y="593.50" width="1" height="95.50" fill="#07a220"/>
<rect x="986" y="593.50" width="1" height="95.50" fill="#07a220"/>
<rect x="980" y="586.70" width="7" height="6.80" fill="#a9aaaf"/>
<rect x="980" y="586.70" width="7" height="1" fill="#9c9ca2"/>
<rect x="980" y="592.50" width="7" height="1" fill="#9c9ca2"/>
<rect x="980" y="586.70" width="1" height="6.80" fill="#9c9ca2"/>
<rect x="986" y="586.70" width="1" height="6.80" fill="#9c9ca2"/>
<rect x="995" y="564.9" width="1" height="124.1" fill="#c2e2c3"/>
<rect x="988" y="559.00" width="7" height="130.00" fill="#33ae3e"/>
<rect x="988" y="559.00" width="7" height="1" fill="#07a220"/>
<rect x="988" y="688.00" width="7" height="1" fill="#07a220"/>
<rect x="988" y="559.00" width="1" height="130.00" fill="#07a220"/>
<rect x="994" y="559.00" width="1" height="130.00" fill="#07a220"/>
<rect x="996" y="568.00" width="7" height="121.00" fill="#33ae3e"/>
<rect x="996" y="568.00" width="7" height="1" fill="#07a220"/>
<rect x="996" y="688.00" width="7" height="1" fill="#07a220"/>
<rect x="996" y="568.00" width="1" height="121.00" fill="#07a220"/>
<rect x="996" y="566.30" width="7" height="1.70" fill="#fcd000"/>
<rect x="996" y="566.30" width="7" height="1" fill="#f6c200"/>
<rect x="996" y="567.00" width="7" height="1" fill="#f6c200"/>
<rect x="996" y="566.30" width="1" height="1.70" fill="#f6c200"/>
<rect x="996" y="563.90" width="7" height="2.40" fill="#e0000c"/>
<rect x="996" y="563.90" width="7" height="1" fill="#d10000"/>
<rect x="996" y="565.30" width="7" height="1" fill="#d10000"/>
<rect x="996" y="563.90" width="1" height="2.40" fill="#d10000"/>
<rect x="1010" y="571.6" width="1" height="117.4" fill="#c2e2c3"/>
<rect x="1003" y="563.10" width="7" height="125.90" fill="#33ae3e"/>
<rect x="1003" y="563.10" width="7" height="1" fill="#07a220"/>
<rect x="1003" y="688.00" width="7" height="1" fill="#07a220"/>
<rect x="1009" y="563.10" width="1" height="125.90" fill="#07a220"/>
<rect x="1018" y="579.3" width="1" height="109.7" fill="#c2e2c3"/>
<rect x="1011" y="575.90" width="7" height="113.10" fill="#33ae3e"/>
<rect x="1011" y="575.90" width="7" height="1" fill="#07a220"/>
<rect x="1011" y="688.00" width="7" height="1" fill="#07a220"/>
<rect x="1011" y="575.90" width="1" height="113.10" fill="#07a220"/>
<rect x="1017" y="575.90" width="1" height="113.10" fill="#07a220"/>
<rect x="1011" y="571.60" width="7" height="4.30" fill="#fcd000"/>
<rect x="1011" y="571.60" width="7" height="1" fill="#f6c200"/>
<rect x="1011" y="574.90" width="7" height="1" fill="#f6c200"/>
<rect x="1011" y="571.60" width="1" height="4.30" fill="#f6c200"/>
<rect x="1017" y="571.60" width="1" height="4.30" fill="#f6c200"/>
<rect x="1011" y="570.60" width="7" height="1.00" fill="#a9aaaf"/>
<rect x="1011" y="570.60" width="7" height="1" fill="#9c9ca2"/>
<rect x="1011" y="570.60" width="1" height="1.00" fill="#9c9ca2"/>
<rect x="1017" y="570.60" width="1" height="1.00" fill="#9c9ca2"/>
<rect x="1026" y="594.5" width="1" height="94.5" fill="#c2e2c3"/>
<rect x="1019" y="580.70" width="7" height="108.30" fill="#33ae3e"/>
<rect x="1019" y="580.70" width="7" height="1" fill="#07a220"/>
<rect x="1019" y="688.00" width="7" height="1" fill="#07a220"/>
<rect x="1019" y="580.70" width="1" height="108.30" fill="#07a220"/>
<rect x="1025" y="580.70" width="1" height="108.30" fill="#07a220"/>
<rect x="1019" y="578.30" width="7" height="2.40" fill="#fcd000"/>
<rect x="1019" y="578.30" width="7" height="1" fill="#f6c200"/>
<rect x="1019" y="579.70" width="7" height="1" fill="#f6c200"/>
<rect x="1019" y="578.30" width="1" height="2.40" fill="#f6c200"/>
<rect x="1025" y="578.30" width="1" height="2.40" fill="#f6c200"/>
<rect x="1034" y="596.2" width="1" height="92.8" fill="#c2e2c3"/>
<rect x="1027" y="593.50" width="7" height="95.50" fill="#33ae3e"/>
<rect x="1027" y="593.50" width="7" height="1" fill="#07a220"/>
<rect x="1027" y="688.00" width="7" height="1" fill="#07a220"/>
<rect x="1027" y="593.50" width="1" height="95.50" fill="#07a220"/>
<rect x="1033" y="593.50" width="1" height="95.50" fill="#07a220"/>
<rect x="1035" y="604.10" width="7" height="84.90" fill="#33ae3e"/>
<rect x="1035" y="604.10" width="7" height="1" fill="#07a220"/>
<rect x="1035" y="688.00" width="7" height="1" fill="#07a220"/>
<rect x="1035" y="604.10" width="1" height="84.90" fill="#07a220"/>
<rect x="1035" y="601.20" width="7" height="2.90" fill="#fcd000"/>
<rect x="1035" y="601.20" width="7" height="1" fill="#f6c200"/>
<rect x="1035" y="603.10" width="7" height="1" fill="#f6c200"/>
<rect x="1035" y="601.20" width="1" height="2.90" fill="#f6c200"/>
<rect x="1035" y="599.50" width="7" height="1.70" fill="#e0000c"/>
<rect x="1035" y="599.50" width="7" height="1" fill="#d10000"/>
<rect x="1035" y="600.20" width="7" height="1" fill="#d10000"/>
<rect x="1035" y="599.50" width="1" height="1.70" fill="#d10000"/>
<rect x="1035" y="595.20" width="7" height="4.30" fill="#a9aaaf"/>
<rect x="1035" y="595.20" width="7" height="1" fill="#9c9ca2"/>
<rect x="1035" y="598.50" width="7" height="1" fill="#9c9ca2"/>
<rect x="1035" y="595.20" width="1" height="4.30" fill="#9c9ca2"/>
<rect x="1050" y="609.0" width="1" height="80.0" fill="#c2e2c3"/>
<rect x="1042" y="614.50" width="8" height="74.50" fill="#33ae3e"/>
<rect x="1042" y="614.50" width="8" height="1" fill="#07a220"/>
<rect x="1042" y="688.00" width="8" height="1" fill="#07a220"/>
<rect x="1049" y="614.50" width="1" height="74.50" fill="#07a220"/>
<rect x="1042" y="608.40" width="8" height="6.10" fill="#fa4208"/>
<rect x="1042" y="608.40" width="8" height="1" fill="#ff1800"/>
<rect x="1042" y="613.50" width="8" height="1" fill="#ff1800"/>
<rect x="1049" y="608.40" width="1" height="6.10" fill="#ff1800"/>
<rect x="1042" y="600.00" width="8" height="8.40" fill="#a9aaaf"/>
<rect x="1042" y="600.00" width="8" height="1" fill="#9c9ca2"/>
<rect x="1042" y="607.40" width="8" height="1" fill="#9c9ca2"/>
<rect x="1049" y="600.00" width="1" height="8.40" fill="#9c9ca2"/>
<rect x="1058" y="609.0" width="1" height="80.0" fill="#c2e2c3"/>
<rect x="1051" y="614.50" width="7" height="74.50" fill="#33ae3e"/>
<rect x="1051" y="614.50" width="7" height="1" fill="#07a220"/>
<rect x="1051" y="688.00" width="7" height="1" fill="#07a220"/>
<rect x="1051" y="614.50" width="1" height="74.50" fill="#07a220"/>
<rect x="1057" y="614.50" width="1" height="74.50" fill="#07a220"/>
<rect x="1051" y="612.80" width="7" height="1.70" fill="#e0000c"/>
<rect x="1051" y="612.80" width="7" height="1" fill="#d10000"/>
<rect x="1051" y="613.50" width="7" height="1" fill="#d10000"/>
<rect x="1051" y="612.80" width="1" height="1.70" fill="#d10000"/>
<rect x="1057" y="612.80" width="1" height="1.70" fill="#d10000"/>
<rect x="1051" y="608.00" width="7" height="4.80" fill="#a9aaaf"/>
<rect x="1051" y="608.00" width="7" height="1" fill="#9c9ca2"/>
<rect x="1051" y="611.80" width="7" height="1" fill="#9c9ca2"/>
<rect x="1051" y="608.00" width="1" height="4.80" fill="#9c9ca2"/>
<rect x="1057" y="608.00" width="1" height="4.80" fill="#9c9ca2"/>
<rect x="1066" y="597.9" width="1" height="91.1" fill="#c2e2c3"/>
<rect x="1059" y="600.00" width="7" height="89.00" fill="#33ae3e"/>
<rect x="1059" y="600.00" width="7" height="1" fill="#07a220"/>
<rect x="1059" y="688.00" width="7" height="1" fill="#07a220"/>
<rect x="1059" y="600.00" width="1" height="89.00" fill="#07a220"/>
<rect x="1065" y="600.00" width="1" height="89.00" fill="#07a220"/>
<rect x="1059" y="598.00" width="7" height="2.00" fill="#fcd000"/>
<rect x="1059" y="598.00" width="7" height="1" fill="#f6c200"/>
<rect x="1059" y="599.00" width="7" height="1" fill="#f6c200"/>
<rect x="1059" y="598.00" width="1" height="2.00" fill="#f6c200"/>
<rect x="1065" y="598.00" width="1" height="2.00" fill="#f6c200"/>
<rect x="1059" y="596.90" width="7" height="1.10" fill="#a9aaaf"/>
<rect x="1059" y="596.90" width="7" height="1" fill="#9c9ca2"/>
<rect x="1059" y="596.90" width="1" height="1.10" fill="#9c9ca2"/>
<rect x="1065" y="596.90" width="1" height="1.10" fill="#9c9ca2"/>
<rect x="1074" y="596.2" width="1" height="92.8" fill="#c2e2c3"/>
<rect x="1067" y="601.20" width="7" height="87.80" fill="#33ae3e"/>
<rect x="1067" y="601.20" width="7" height="1" fill="#07a220"/>
<rect x="1067" y="688.00" width="7" height="1" fill="#07a220"/>
<rect x="1067" y="601.20" width="1" height="87.80" fill="#07a220"/>
<rect x="1073" y="601.20" width="1" height="87.80" fill="#07a220"/>
<rect x="1067" y="595.20" width="7" height="6.00" fill="#a9aaaf"/>
<rect x="1067" y="595.20" width="7" height="1" fill="#9c9ca2"/>
<rect x="1067" y="600.20" width="7" height="1" fill="#9c9ca2"/>
<rect x="1067" y="595.20" width="1" height="6.00" fill="#9c9ca2"/>
<rect x="1073" y="595.20" width="1" height="6.00" fill="#9c9ca2"/>
<rect x="1081" y="594.2" width="1" height="94.8" fill="#c2e2c3"/>
<rect x="1075" y="593.50" width="6" height="95.50" fill="#33ae3e"/>
<rect x="1075" y="593.50" width="6" height="1" fill="#07a220"/>
<rect x="1075" y="688.00" width="6" height="1" fill="#07a220"/>
<rect x="1075" y="593.50" width="1" height="95.50" fill="#07a220"/>
<rect x="1080" y="593.50" width="1" height="95.50" fill="#07a220"/>
<rect x="1075" y="592.00" width="6" height="1.50" fill="#a9aaaf"/>
<rect x="1075" y="592.00" width="6" height="1" fill="#9c9ca2"/>
<rect x="1075" y="592.00" width="1" height="1.50" fill="#9c9ca2"/>
<rect x="1080" y="592.00" width="1" height="1.50" fill="#9c9ca2"/>
<rect x="1082" y="599.70" width="7" height="89.30" fill="#33ae3e"/>
<rect x="1082" y="599.70" width="7" height="1" fill="#07a220"/>
<rect x="1082" y="688.00" width="7" height="1" fill="#07a220"/>
<rect x="1082" y="599.70" width="1" height="89.30" fill="#07a220"/>
<rect x="1082" y="597.80" width="7" height="1.90" fill="#fcd000"/>
<rect x="1082" y="597.80" width="7" height="1" fill="#f6c200"/>
<rect x="1082" y="598.70" width="7" height="1" fill="#f6c200"/>
<rect x="1082" y="597.80" width="1" height="1.90" fill="#f6c200"/>
<rect x="1082" y="593.20" width="7" height="4.60" fill="#a9aaaf"/>
<rect x="1082" y="593.20" width="7" height="1" fill="#9c9ca2"/>
<rect x="1082" y="596.80" width="7" height="1" fill="#9c9ca2"/>
<rect x="1082" y="593.20" width="1" height="4.60" fill="#9c9ca2"/>
<rect x="1097" y="588.0" width="1" height="101.0" fill="#c2e2c3"/>
<rect x="1089" y="582.60" width="8" height="106.40" fill="#33ae3e"/>
<rect x="1089" y="582.60" width="8" height="1" fill="#07a220"/>
<rect x="1089" y="688.00" width="8" height="1" fill="#07a220"/>
<rect x="1096" y="582.60" width="1" height="106.40" fill="#07a220"/>
<rect x="1105" y="588.0" width="1" height="101.0" fill="#c2e2c3"/>
<rect x="1098" y="593.70" width="7" height="95.30" fill="#33ae3e"/>
<rect x="1098" y="593.70" width="7" height="1" fill="#07a220"/>
<rect x="1098" y="688.00" width="7" height="1" fill="#07a220"/>
<rect x="1098" y="593.70" width="1" height="95.30" fill="#07a220"/>
<rect x="1104" y="593.70" width="1" height="95.30" fill="#07a220"/>
<rect x="1098" y="590.40" width="7" height="3.30" fill="#fcd000"/>
<rect x="1098" y="590.40" width="7" height="1" fill="#f6c200"/>
<rect x="1098" y="592.70" width="7" height="1" fill="#f6c200"/>
<rect x="1098" y="590.40" width="1" height="3.30" fill="#f6c200"/>
<rect x="1104" y="590.40" width="1" height="3.30" fill="#f6c200"/>
<rect x="1098" y="587.00" width="7" height="3.40" fill="#a9aaaf"/>
<rect x="1098" y="587.00" width="7" height="1" fill="#9c9ca2"/>
<rect x="1098" y="589.40" width="7" height="1" fill="#9c9ca2"/>
<rect x="1098" y="587.00" width="1" height="3.40" fill="#9c9ca2"/>
<rect x="1104" y="587.00" width="1" height="3.40" fill="#9c9ca2"/>
<rect x="1113" y="600.9" width="1" height="88.1" fill="#c2e2c3"/>
<rect x="1106" y="585.50" width="7" height="103.50" fill="#33ae3e"/>
<rect x="1106" y="585.50" width="7" height="1" fill="#07a220"/>
<rect x="1106" y="688.00" width="7" height="1" fill="#07a220"/>
<rect x="1106" y="585.50" width="1" height="103.50" fill="#07a220"/>
<rect x="1112" y="585.50" width="1" height="103.50" fill="#07a220"/>
<rect x="1106" y="583.90" width="7" height="1.60" fill="#e0000c"/>
<rect x="1106" y="583.90" width="7" height="1" fill="#d10000"/>
<rect x="1106" y="584.50" width="7" height="1" fill="#d10000"/>
<rect x="1106" y="583.90" width="1" height="1.60" fill="#d10000"/>
<rect x="1112" y="583.90" width="1" height="1.60" fill="#d10000"/>
<rect x="1121" y="600.9" width="1" height="88.1" fill="#c2e2c3"/>
<rect x="1114" y="607.80" width="7" height="81.20" fill="#33ae3e"/>
<rect x="1114" y="607.80" width="7" height="1" fill="#07a220"/>
<rect x="1114" y="688.00" width="7" height="1" fill="#07a220"/>
<rect x="1114" y="607.80" width="1" height="81.20" fill="#07a220"/>
<rect x="1120" y="607.80" width="1" height="81.20" fill="#07a220"/>
<rect x="1114" y="599.90" width="7" height="7.90" fill="#a9aaaf"/>
<rect x="1114" y="599.90" width="7" height="1" fill="#9c9ca2"/>
<rect x="1114" y="606.80" width="7" height="1" fill="#9c9ca2"/>
<rect x="1114" y="599.90" width="1" height="7.90" fill="#9c9ca2"/>
<rect x="1120" y="599.90" width="1" height="7.90" fill="#9c9ca2"/>
<rect x="1122" y="596.90" width="7" height="92.10" fill="#33ae3e"/>
<rect x="1122" y="596.90" width="7" height="1" fill="#07a220"/>
<rect x="1122" y="688.00" width="7" height="1" fill="#07a220"/>
<rect x="1122" y="596.90" width="1" height="92.10" fill="#07a220"/>
<rect x="1122" y="594.70" width="7" height="2.20" fill="#e0000c"/>
<rect x="1122" y="594.70" width="7" height="1" fill="#d10000"/>
<rect x="1122" y="595.90" width="7" height="1" fill="#d10000"/>
<rect x="1122" y="594.70" width="1" height="2.20" fill="#d10000"/>
<rect x="1136" y="612.5" width="1" height="76.5" fill="#c2e2c3"/>
<rect x="1129" y="618.10" width="7" height="70.90" fill="#33ae3e"/>
<rect x="1129" y="618.10" width="7" height="1" fill="#07a220"/>
<rect x="1129" y="688.00" width="7" height="1" fill="#07a220"/>
<rect x="1135" y="618.10" width="1" height="70.90" fill="#07a220"/>
<rect x="1129" y="611.50" width="7" height="6.60" fill="#a9aaaf"/>
<rect x="1129" y="611.50" width="7" height="1" fill="#9c9ca2"/>
<rect x="1129" y="617.10" width="7" height="1" fill="#9c9ca2"/>
<rect x="1135" y="611.50" width="1" height="6.60" fill="#9c9ca2"/>
<rect x="1144" y="600.9" width="1" height="88.1" fill="#c2e2c3"/>
<rect x="1137" y="598.70" width="7" height="90.30" fill="#33ae3e"/>
<rect x="1137" y="598.70" width="7" height="1" fill="#07a220"/>
<rect x="1137" y="688.00" width="7" height="1" fill="#07a220"/>
<rect x="1137" y="598.70" width="1" height="90.30" fill="#07a220"/>
<rect x="1143" y="598.70" width="1" height="90.30" fill="#07a220"/>
<rect x="1137" y="596.90" width="7" height="1.80" fill="#a9aaaf"/>
<rect x="1137" y="596.90" width="7" height="1" fill="#9c9ca2"/>
<rect x="1137" y="597.70" width="7" height="1" fill="#9c9ca2"/>
<rect x="1137" y="596.90" width="1" height="1.80" fill="#9c9ca2"/>
<rect x="1143" y="596.90" width="1" height="1.80" fill="#9c9ca2"/>
<rect x="1145" y="606.80" width="7" height="82.20" fill="#33ae3e"/>
<rect x="1145" y="606.80" width="7" height="1" fill="#07a220"/>
<rect x="1145" y="688.00" width="7" height="1" fill="#07a220"/>
<rect x="1145" y="606.80" width="1" height="82.20" fill="#07a220"/>
<rect x="1151" y="606.80" width="1" height="82.20" fill="#07a220"/>
<rect x="1145" y="604.80" width="7" height="2.00" fill="#fcd000"/>
<rect x="1145" y="604.80" width="7" height="1" fill="#f6c200"/>
<rect x="1145" y="605.80" width="7" height="1" fill="#f6c200"/>
<rect x="1145" y="604.80" width="1" height="2.00" fill="#f6c200"/>
<rect x="1151" y="604.80" width="1" height="2.00" fill="#f6c200"/>
<rect x="1145" y="599.90" width="7" height="4.90" fill="#a9aaaf"/>
<rect x="1145" y="599.90" width="7" height="1" fill="#9c9ca2"/>
<rect x="1145" y="603.80" width="7" height="1" fill="#9c9ca2"/>
<rect x="1145" y="599.90" width="1" height="4.90" fill="#9c9ca2"/>
<rect x="1151" y="599.90" width="1" height="4.90" fill="#9c9ca2"/></g><rect x="59.5" y="494.00" width="1088.5" height="1" fill="#000c1e" fill-opacity="0.075"/><rect x="59.5" y="542.80" width="1088.5" height="1" fill="#000c1e" fill-opacity="0.075"/><rect x="59.5" y="591.70" width="1088.5" height="1" fill="#000c1e" fill-opacity="0.075"/><rect x="59.5" y="640.50" width="1088.5" height="1" fill="#000c1e" fill-opacity="0.075"/><rect x="60" y="701" width="1088" height="8.5" fill="#33ae3e"/><rect x="60" y="708.3" width="1088" height="1.1" fill="#07a220"/><rect x="60" y="701" width="1" height="8.5" fill="#07a220"/></svg>
<div class="dot" style="left:59.30px;top:732.90px;background:#2ca83a"></div><div class="t" style="left:70.60px;top:731.96px;font-size:9.5px;color:#333;font-weight:normal;">2xx</div><div class="dot" style="left:97.70px;top:732.90px;background:#f7c500"></div><div class="t" style="left:109.00px;top:731.96px;font-size:9.5px;color:#333;font-weight:normal;">3xx</div><div class="dot" style="left:135.70px;top:732.90px;background:#ff4200"></div><div class="t" style="left:147.00px;top:731.96px;font-size:9.5px;color:#333;font-weight:normal;">4xx</div><div class="dot" style="left:174.30px;top:732.90px;background:#d9000e"></div><div class="t" style="left:185.60px;top:731.96px;font-size:9.5px;color:#333;font-weight:normal;">5xx</div><div class="dot" style="left:212.70px;top:732.90px;background:#a9a9ae"></div><div class="t" style="left:224.00px;top:731.96px;font-size:9.5px;color:#333;font-weight:normal;">Timeout</div>
</body></html>
